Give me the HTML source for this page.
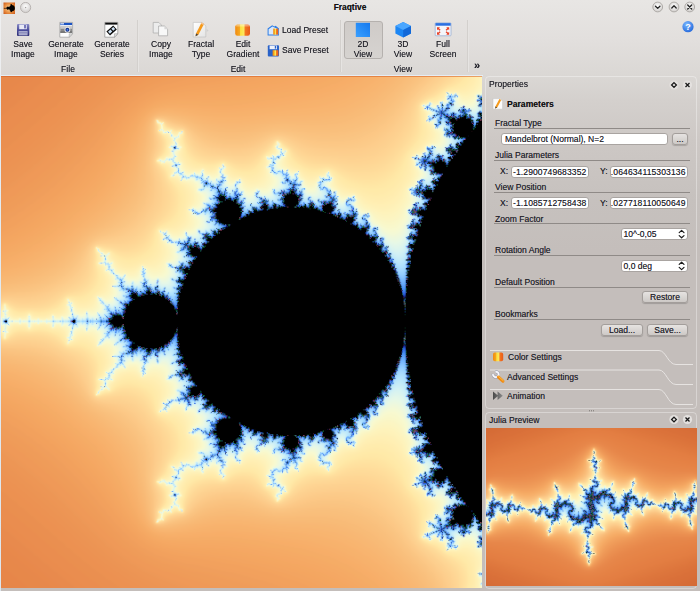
<!DOCTYPE html>
<html><head><meta charset="utf-8"><title>Fraqtive</title>
<style>
html,body{margin:0;padding:0}
body{width:700px;height:591px;position:relative;overflow:hidden;background:linear-gradient(#e8e6e4 0,#e2dfdd 40px,#dad7d4 77px,#d4d0cd 100px,#cdc8c5 140px,#c6c1be 200px,#c4bebb 250px,#c4bebb 100%);font-family:"Liberation Sans",sans-serif;font-size:8.55px;color:#22222a;line-height:10px}
.a{position:absolute}
.t{position:absolute;white-space:nowrap}
.t,.lb,.in span,.bt{text-shadow:0 0 .35px rgba(20,20,30,.55)}
.c{text-align:center}
#top{left:0;top:0;width:700px;height:77px}
#fr{left:1px;top:76px;width:481px;height:512px;background:#000;overflow:hidden}
#fr canvas,#ju canvas{position:absolute;left:0;top:0}
#pp{left:485px;top:76px;width:212px;height:333px;border:1px solid rgba(255,255,255,.35);border-radius:4px;box-sizing:border-box}
#jp{left:485px;top:412px;width:212px;height:177px;border:1px solid rgba(255,255,255,.35);border-radius:4px;box-sizing:border-box}
#ju{left:486px;top:428px;width:211px;height:158px;background:#e08040;overflow:hidden}
.in{position:absolute;background:#fff;border:1px solid #a9a4a1;border-radius:3px;box-sizing:border-box;height:12px;overflow:hidden}
.in span{position:absolute;top:0;white-space:nowrap;line-height:10px}
.bt{position:absolute;box-sizing:border-box;height:12px;border:1px solid #a39e9b;border-radius:3px;background:linear-gradient(#e6e3e1,#cdc9c6);box-shadow:0 1px 1px rgba(0,0,0,.18);text-align:center;line-height:10px}
.hl{position:absolute;height:1px;background:#8f8a87;left:494px;width:196px}
.lb{position:absolute;left:495px;white-space:nowrap}
</style></head><body>
<div id="top" class="a"></div>
<div id="fr" class="a"><svg class="a" style="left:0;top:0" width="482" height="512" viewBox="0 0 482 512"><defs><filter id="fb" x="-5%" y="-5%" width="110%" height="110%"><feGaussianBlur stdDeviation="2.5"/></filter><filter id="fc"><feGaussianBlur stdDeviation="0.6"/></filter><filter id="fa" x="-10%" y="-10%" width="120%" height="120%"><feGaussianBlur stdDeviation="7"/></filter></defs><rect width="482" height="512" fill="#e8894b"/><g filter="url(#fa)"><path fill="#ea8e4f" fill-rule="evenodd" d="M-2 46 -2 444 1 444 49 485 82 511 82 513 483 513 483 -2 55 -2 55 0 34 17 2 45Z"/><path fill="#eb9252" fill-rule="evenodd" d="M-2 77 -2 413 2 414 88 488 104 500 117 508 120 511 120 513 483 513 483 -2 90 -2 90 0 86 4 67 19 35 48 0 77Z"/><path fill="#ed9655" fill-rule="evenodd" d="M-2 102 -2 387 3 389 33 413 99 474 129 496 157 510 158 513 483 513 483 -2 119 -2 119 0 96 18 37 73 1 102Z"/><path fill="#ef9b59" fill-rule="evenodd" d="M-2 123 -2 366 2 367 15 376 46 401 116 470 134 483 155 494 192 507 204 510 205 513 483 513 483 -2 145 -2 145 0 143 2 133 7 113 22 42 92 13 115 3 122Z"/><path fill="#f1a15d" fill-rule="evenodd" d="M-2 146 -2 343 2 344 24 358 59 386 82 409 115 449 134 467 153 478 167 483 249 501 275 509 278 511 278 513 483 513 483 -2 193 -2 192 1 169 6 152 12 132 24 112 44 92 69 74 89 54 108 19 135 3 145Z"/><path fill="#f4a762" fill-rule="evenodd" d="M-2 164 -2 325 0 325 24 338 43 351 65 369 89 393 104 412 127 446 142 461 152 467 168 472 186 474 187 475 196 475 197 476 206 476 207 477 229 479 230 480 255 484 279 490 315 502 332 510 333 513 483 513 483 -2 273 -2 272 1 257 5 253 5 237 9 232 9 231 10 226 10 225 11 219 11 218 12 176 16 153 22 141 29 129 41 100 83 85 101 70 116 34 145 13 158 1 164Z"/><path fill="#f6ae68" fill-rule="evenodd" d="M-2 179 -2 311 2 311 14 317 16 317 37 329 61 347 85 368 99 383 108 395 120 415 133 440 139 449 145 455 153 460 169 464 214 464 215 465 238 466 239 467 257 469 258 470 262 470 263 471 267 471 268 472 272 472 273 473 277 473 303 479 322 485 346 496 365 508 368 511 368 513 483 513 483 -2 331 -2 331 0 328 2 305 10 289 14 285 14 280 16 255 20 254 21 235 23 234 24 224 24 223 25 174 25 173 26 165 26 154 29 147 33 138 42 128 58 123 69 109 93 96 110 78 128 58 145 33 163 6 177Z"/></g><g filter="url(#fb)"><path fill="#f7b571" fill-rule="evenodd" d="M-2 195 -2 294 19 300 41 311 59 324 72 336 97 356 113 373 123 389 123 391 133 413 141 437 146 447 151 452 158 455 180 455 181 454 187 454 188 453 193 453 206 450 213 450 214 449 236 449 237 450 245 450 246 451 252 451 253 452 278 455 279 456 309 459 310 460 327 463 339 467 356 475 370 484 384 495 400 511 400 513 483 513 483 -2 376 -2 376 0 372 4 360 12 345 20 335 23 332 25 311 30 306 30 305 31 275 34 274 35 268 35 267 36 262 36 249 39 242 39 241 40 210 40 209 39 203 39 202 38 197 38 184 35 176 35 175 34 156 35 149 39 145 44 140 55 138 63 136 66 126 94 120 106 111 119 94 136 45 176 20 189 2 195Z"/><path fill="#f9be7b" fill-rule="evenodd" d="M153 40 148 48 145 65 141 77 135 104 128 119 121 129 106 143 85 157 63 179 47 191 33 198 22 202 -2 207 -2 283 4 283 27 289 51 301 59 307 82 330 104 345 117 356 126 367 134 383 142 416 145 424 147 438 150 446 154 450 166 451 167 450 181 448 206 439 214 438 215 437 222 437 223 436 244 437 245 438 250 438 266 442 282 443 283 444 309 443 310 444 329 445 342 448 353 452 363 457 375 465 388 476 410 498 420 510 420 513 483 513 483 -2 401 -2 401 0 384 17 367 30 349 39 326 45 319 45 318 46 275 46 274 47 268 47 267 48 263 48 247 52 242 52 241 53 218 53 217 52 212 52 204 50 179 41 175 41 169 39 155 39Z"/><path fill="#fbc886" fill-rule="evenodd" d="M483 -2 420 -2 419 2 379 44 361 55 349 59 339 60 338 61 312 61 311 60 305 60 304 59 284 56 283 55 274 55 241 65 221 65 205 61 181 47 178 47 160 41 154 42 152 45 152 51 151 52 151 69 147 82 146 108 143 119 137 131 129 141 121 148 109 155 107 155 92 162 83 171 71 188 61 197 52 203 37 210 26 213 -2 216 -2 273 24 276 41 281 51 286 63 294 74 305 84 320 90 326 119 340 133 353 138 360 143 370 145 377 146 391 147 392 147 407 151 421 151 438 152 439 152 444 155 448 163 448 176 443 182 442 206 428 217 425 225 425 226 424 244 425 271 434 287 434 297 431 307 430 308 429 315 429 316 428 333 428 334 429 347 430 362 435 373 441 381 447 394 460 407 476 425 494 435 508 436 513 483 513Z"/><path fill="#fcd190" fill-rule="evenodd" d="M483 -2 436 -2 436 0 412 23 401 43 395 51 383 63 368 72 353 76 328 76 327 75 313 74 298 69 282 61 270 62 261 68 245 75 232 76 231 75 214 74 206 72 197 67 183 52 169 48 160 43 155 43 154 44 154 55 156 60 156 72 152 81 152 89 156 104 156 118 154 126 150 134 143 144 130 157 120 162 112 164 100 165 92 168 79 195 69 205 56 213 41 220 33 222 26 222 25 223 1 222 -2 223 -2 267 3 267 4 268 7 267 30 267 45 271 57 277 71 286 78 293 84 303 90 319 93 322 98 324 118 327 129 332 142 344 148 352 153 361 156 372 156 385 152 400 152 408 156 418 156 429 154 434 154 446 155 447 162 446 170 441 180 439 184 437 190 429 199 421 205 418 217 415 225 415 226 414 242 414 243 415 247 415 262 422 271 428 280 429 304 418 315 415 334 414 335 413 356 414 364 416 375 421 386 429 393 436 400 445 409 462 414 469 431 484 441 495 447 506 448 513 483 513Z"/><path fill="#fdda98" fill-rule="evenodd" d="M483 -2 447 -2 447 1 443 5 417 25 414 31 410 47 405 57 400 64 384 80 376 85 363 89 348 89 332 85 311 83 299 78 290 70 278 63 273 64 256 78 246 83 237 84 226 81 207 80 197 76 189 68 182 53 177 53 166 49 162 45 156 43 155 44 156 56 160 63 160 73 154 83 154 86 160 96 165 113 165 124 162 133 145 156 136 165 125 170 108 170 107 169 95 169 93 170 89 192 84 203 75 211 63 216 47 226 34 229 16 229 6 225 -2 226 -2 263 7 264 14 261 19 261 20 260 38 261 48 264 62 273 76 279 85 288 88 294 91 311 92 312 92 317 94 320 101 321 102 320 122 319 130 321 138 326 143 331 152 344 160 353 165 366 165 376 160 393 154 404 154 407 160 417 160 427 156 434 155 446 161 445 171 438 181 437 183 435 190 420 198 413 209 409 223 409 233 406 245 406 257 412 272 425 279 426 289 420 300 411 309 407 319 406 320 405 329 405 330 404 334 404 345 401 352 401 353 400 366 401 375 404 382 408 397 422 404 431 409 440 416 463 423 470 430 474 440 482 451 493 455 501 456 513 483 513Z"/><path fill="#fee3a1" fill-rule="evenodd" d="M483 -2 457 -2 457 1 450 7 441 12 433 19 422 24 418 29 416 52 409 66 389 91 382 96 371 100 354 100 344 97 329 90 312 90 305 88 296 83 292 79 290 75 277 64 275 64 270 71 253 87 247 90 236 90 223 84 218 84 217 85 204 85 200 84 194 81 187 74 183 65 182 54 173 54 166 51 162 46 155 44 157 49 157 55 162 61 164 67 163 68 162 76 155 83 155 85 163 94 165 101 171 111 173 118 173 126 170 135 154 151 146 167 139 173 129 177 120 177 110 173 95 170 94 171 93 200 89 208 83 214 77 217 65 219 55 228 49 231 42 233 15 233 5 227 -2 228 -2 261 4 263 17 256 40 256 48 258 54 261 63 269 67 271 76 272 82 275 87 279 93 289 94 319 109 317 112 315 122 312 127 312 134 314 140 317 147 324 153 337 167 350 172 359 173 372 162 397 155 404 155 406 161 412 163 416 163 427 157 434 157 441 155 444 156 446 159 444 162 444 163 441 169 437 175 435 181 436 182 435 183 425 188 414 196 407 206 404 225 405 232 401 239 399 248 400 254 403 275 425 278 425 286 419 291 412 298 405 309 400 326 400 327 399 331 399 345 392 357 389 373 390 379 392 387 397 396 406 412 428 417 442 417 451 418 452 418 461 419 463 435 472 442 478 452 484 458 490 462 498 462 503 463 504 462 513 483 513Z"/><path fill="#feebac" fill-rule="evenodd" d="M483 -2 466 -2 465 2 459 8 453 11 445 13 436 21 432 23 426 24 420 28 422 54 418 64 407 77 399 95 395 100 385 108 377 111 363 111 348 107 342 104 329 93 323 93 318 95 308 95 305 94 291 85 288 80 287 74 277 65 275 65 272 70 272 72 263 80 258 90 255 93 249 96 235 95 231 93 223 86 220 86 211 90 196 88 190 85 184 78 183 71 180 64 181 54 174 56 170 53 166 53 162 49 161 46 156 44 156 47 158 49 158 53 157 54 166 63 165 75 160 81 156 83 156 85 166 93 168 101 177 111 180 117 180 128 175 141 170 146 160 151 158 151 156 153 154 166 150 174 144 179 135 183 123 184 116 181 107 174 102 174 98 171 95 171 95 176 96 177 96 185 95 187 98 194 98 205 94 212 85 220 81 222 65 221 62 227 57 232 44 237 33 237 28 235 23 237 16 237 9 233 3 227 0 231 -2 231 -2 258 0 258 2 262 4 262 14 253 20 252 21 253 30 254 35 252 41 252 56 257 60 260 64 267 67 269 68 268 79 267 86 270 96 280 98 285 98 295 95 302 96 304 95 319 104 315 108 315 115 309 121 306 127 305 139 308 145 311 151 317 154 324 156 336 159 339 169 343 176 350 180 361 180 372 176 380 168 388 167 394 165 398 156 404 156 406 161 409 165 414 165 419 166 420 166 426 158 434 158 441 156 443 156 445 162 443 162 441 165 437 171 436 173 434 177 434 178 435 182 434 180 425 183 418 183 414 185 410 191 404 195 402 203 401 204 400 213 400 222 404 230 397 234 395 242 393 251 394 260 402 263 410 271 416 274 423 276 425 283 418 286 417 290 406 295 401 304 396 310 394 315 394 327 397 330 396 340 387 347 383 366 378 375 378 386 382 397 392 403 402 406 411 419 427 422 436 420 462 427 466 430 466 437 469 444 476 460 482 465 487 467 491 468 500 469 501 467 513 483 513Z"/></g><g filter="url(#fc)"><path fill="#fdf2bb" fill-rule="evenodd" d="M483 -2 476 -2 476 2 474 8 467 15 464 16 445 15 443 20 440 23 434 26 428 25 421 28 421 31 425 37 424 45 427 48 430 55 429 61 422 70 410 80 410 98 398 118 391 125 384 128 371 127 364 124 353 116 348 116 342 114 335 108 332 100 327 94 322 98 317 99 313 102 306 102 298 94 290 92 285 87 284 82 286 74 280 71 279 68 276 65 274 69 274 75 269 79 266 79 264 81 265 82 265 87 261 100 254 105 246 105 240 101 231 100 225 94 225 91 222 87 212 95 206 95 202 92 198 93 188 92 182 86 179 81 180 69 177 64 181 56 180 55 175 58 173 58 170 54 164 54 162 52 161 47 157 46 159 48 158 54 168 60 169 67 167 70 168 77 162 82 159 82 156 84 161 87 167 88 170 93 169 100 170 101 174 101 178 105 184 108 188 112 190 117 190 124 185 133 185 144 179 151 171 154 170 153 159 153 157 154 159 159 159 164 161 168 161 177 158 182 151 187 139 188 132 193 124 193 115 188 109 181 108 176 103 176 100 175 97 172 95 172 99 180 99 184 97 186 97 188 102 192 102 194 106 201 106 208 103 214 96 218 93 223 87 229 79 230 66 222 64 233 60 237 57 238 51 237 46 241 33 241 28 237 23 241 13 241 8 237 7 233 4 229 3 229 0 234 -2 234 -2 255 0 255 2 257 3 261 4 261 5 258 7 257 8 253 12 249 24 249 27 252 29 252 32 249 44 248 47 249 50 252 54 252 55 251 62 254 64 257 66 267 71 265 77 260 85 260 89 262 92 265 94 270 100 273 104 277 106 281 105 291 103 293 101 299 97 302 97 304 99 306 99 309 96 314 96 318 103 313 107 314 109 312 110 307 118 299 126 296 133 297 140 302 150 302 154 304 159 309 161 313 161 322 159 325 159 331 157 335 165 337 167 336 174 336 178 338 184 344 185 346 185 356 190 365 190 373 188 377 183 382 180 383 175 388 172 388 169 390 170 397 166 402 160 403 157 405 158 407 162 407 167 411 168 413 167 420 169 422 168 429 158 436 159 437 159 441 157 444 161 443 161 440 164 436 170 435 173 432 181 434 177 426 178 422 180 420 179 409 183 402 189 397 196 396 201 398 205 395 211 394 222 403 225 399 226 394 232 389 239 389 245 385 252 384 257 386 262 391 263 399 265 402 264 409 268 410 274 415 274 421 277 424 279 422 279 420 283 416 286 415 284 407 285 402 289 398 293 396 297 396 305 388 311 387 318 391 321 391 326 395 328 395 333 388 334 383 341 376 346 374 354 373 363 366 372 362 378 362 379 361 385 362 390 364 397 370 408 387 410 392 410 410 418 415 429 428 430 434 428 440 424 445 425 452 422 456 421 462 424 462 428 465 429 464 435 464 439 466 443 470 445 474 466 474 473 480 476 487 474 495 475 513 483 513Z"/><path fill="#f7f9d0" fill-rule="evenodd" d="M481 491 476 496 476 498 479 502 480 513 483 513 483 491ZM483 13 480 13 468 24 460 23 458 19 454 16 453 17 446 16 444 20 444 23 438 25 436 28 433 29 430 26 428 26 421 29 423 33 427 36 425 44 429 46 432 49 432 51 437 56 437 63 434 66 428 69 425 69 423 74 419 78 414 78 411 80 411 83 413 85 413 89 417 94 417 100 414 105 406 113 407 114 407 124 400 137 394 143 388 145 378 143 369 135 362 133 357 128 356 123 353 118 348 120 340 120 337 117 336 114 333 113 330 110 331 101 328 98 327 95 325 96 323 100 319 100 312 109 305 108 302 103 298 100 297 95 294 95 291 97 287 93 285 93 280 90 279 85 284 79 285 74 282 74 278 70 278 68 276 66 276 68 274 70 276 76 274 78 265 81 268 85 265 91 267 93 267 96 269 99 269 105 263 111 255 111 252 113 246 113 241 109 241 106 238 102 235 104 230 105 222 95 223 93 222 88 217 92 217 96 213 100 205 98 202 93 198 96 194 96 193 95 187 97 180 91 180 86 176 83 176 79 175 78 175 76 179 72 179 70 177 69 177 67 175 65 175 63 178 60 179 56 174 60 169 55 163 55 161 53 160 47 159 47 160 48 159 54 162 56 166 56 171 62 172 67 168 70 170 73 170 79 165 81 162 84 160 83 158 84 161 86 168 85 170 87 170 90 173 93 172 97 170 99 171 100 176 99 180 104 188 104 194 109 195 115 198 119 197 127 187 133 190 137 190 139 193 142 193 148 190 152 186 154 183 154 180 158 175 160 171 159 165 154 164 155 160 155 159 154 158 155 161 158 161 164 170 173 170 179 164 186 162 192 157 196 150 196 141 189 137 197 134 200 128 200 124 197 118 197 111 189 112 187 111 185 107 184 106 182 107 177 104 178 96 173 101 181 101 184 98 187 101 188 104 191 104 195 106 195 111 200 112 206 110 209 111 216 106 221 96 220 97 228 96 231 91 235 85 234 82 236 77 236 71 229 71 226 67 223 67 227 66 228 67 230 67 237 63 240 60 240 56 242 51 239 48 243 41 244 37 242 31 243 29 241 29 239 27 239 24 243 20 243 19 242 17 243 10 243 5 237 6 234 4 231 2 234 2 239 -2 240 -2 249 2 250 2 254 1 255 4 258 6 256 5 252 11 246 16 246 17 247 23 246 26 248 28 252 29 249 34 246 36 247 39 246 49 247 51 251 55 248 58 248 61 250 64 250 67 253 67 259 66 260 67 266 71 263 73 257 78 253 81 253 84 255 92 255 97 261 96 269 105 268 110 272 111 274 110 281 112 284 111 289 104 295 104 299 101 302 98 302 101 305 100 311 96 315 97 317 99 314 103 312 107 313 106 308 109 304 111 304 112 299 117 293 125 292 128 289 135 290 141 300 151 293 156 293 162 298 164 304 170 310 170 317 161 326 161 331 158 335 166 335 172 330 177 330 184 336 189 337 193 341 193 347 187 356 194 360 198 364 198 371 195 374 195 379 191 384 179 386 179 388 175 391 174 390 170 390 173 395 173 397 170 400 170 402 166 405 160 404 158 406 163 406 170 411 170 417 168 419 172 423 171 428 167 433 163 433 159 436 161 438 164 434 166 435 168 434 169 435 173 430 175 430 178 433 180 433 175 426 176 422 179 419 178 416 175 413 176 406 180 403 181 397 186 393 191 393 192 394 197 393 200 396 202 396 204 392 210 390 214 390 217 394 217 397 222 402 223 400 223 396 222 395 229 385 233 385 239 387 241 384 241 381 247 376 251 376 254 378 262 378 269 384 269 390 267 396 265 398 265 400 268 404 265 409 274 411 276 413 275 421 277 423 278 419 285 415 284 410 279 405 279 401 282 398 286 397 290 393 297 394 298 393 298 389 306 381 311 380 317 386 318 389 323 390 327 394 329 390 331 389 330 380 341 369 353 371 356 366 357 361 361 357 365 355 368 355 374 349 379 346 390 345 396 348 401 354 407 365 407 375 406 377 413 383 417 390 417 395 413 400 413 405 411 407 411 409 415 412 419 412 424 417 424 420 429 421 435 424 437 427 437 433 433 437 431 442 429 444 425 445 427 454 422 458 421 461 424 461 428 464 431 463 432 461 435 461 439 465 442 465 444 467 446 474 450 472 455 473 461 466 467 465 474 472 481 477 483 477Z"/><path fill="#dff5eb" fill-rule="evenodd" d="M477 496 477 498 480 501 481 504 480 507 481 513 483 513 483 496ZM40 245 37 243 35 245 34 244 31 245 28 241 25 245 20 245 19 244 13 245 17 245 18 246 19 245 25 245 28 248 28 250 28 247 30 245 35 245 36 246ZM5 234 3 235 4 237 3 241 2 242 -2 241 -2 246 0 246 3 249 4 252 4 250 10 245 4 239 4 235ZM483 17 475 19 475 23 474 24 475 27 472 31 466 31 462 28 461 29 457 29 455 27 456 19 454 17 453 18 446 17 445 20 446 24 444 26 439 25 433 31 430 29 430 27 422 29 424 33 427 33 430 36 427 39 426 44 428 45 431 44 433 46 433 50 435 52 440 52 441 53 442 60 444 62 445 66 440 72 437 72 433 69 425 70 425 74 419 80 414 79 411 81 415 85 414 89 420 93 424 97 424 99 416 104 415 108 412 111 411 110 408 112 409 118 412 120 413 125 410 130 405 134 408 142 407 145 404 148 402 156 396 162 389 162 381 157 378 151 376 149 373 149 368 143 369 141 368 137 361 137 360 138 357 135 357 132 352 127 354 125 353 119 350 121 345 122 340 126 335 118 335 115 332 115 325 108 330 103 330 101 327 98 327 96 325 97 324 101 319 101 319 103 316 106 316 115 312 118 307 117 301 109 301 104 297 103 296 99 297 97 296 96 294 96 290 100 286 94 277 93 274 90 275 84 278 83 281 79 283 79 284 75 281 75 280 72 278 72 276 70 275 71 279 74 279 76 274 80 266 82 270 84 270 86 267 90 269 93 269 96 273 99 275 99 278 102 277 109 275 111 271 112 270 115 267 118 261 118 256 113 250 121 246 121 237 110 239 107 238 103 231 110 228 110 225 108 225 103 224 102 225 100 220 95 223 91 222 90 218 92 219 100 213 104 210 104 208 102 208 100 204 101 201 96 201 94 198 99 194 97 187 100 184 99 182 97 182 95 180 95 178 93 177 90 179 87 177 87 173 84 174 81 173 75 177 71 174 66 174 62 175 61 173 61 169 57 170 60 173 62 172 64 174 66 172 69 169 70 171 72 172 80 170 82 165 82 164 84 170 84 172 87 171 89 175 92 175 94 172 99 176 97 180 100 180 102 184 102 185 103 191 101 194 104 197 105 199 108 197 114 204 116 206 119 205 123 201 126 202 129 198 133 194 133 193 132 188 133 191 136 191 138 200 140 202 143 202 149 199 152 196 152 195 156 193 158 188 158 186 156 184 156 184 159 182 162 177 162 173 164 166 158 165 155 164 156 160 155 163 159 161 163 164 163 166 166 172 167 176 172 175 174 175 177 177 179 176 184 173 187 169 186 166 187 166 190 170 195 169 199 164 204 160 204 158 202 150 204 145 200 144 193 141 190 140 202 136 206 131 204 129 206 127 206 124 203 124 199 119 200 112 195 112 193 109 191 110 186 107 187 105 185 105 179 100 177 103 181 103 184 99 187 101 186 106 190 105 194 107 194 114 200 114 203 116 205 112 210 116 213 117 218 112 222 112 225 110 227 105 227 100 222 97 222 98 223 97 224 102 230 101 234 99 236 96 236 94 240 89 240 85 236 82 241 78 241 77 239 74 239 72 237 71 231 69 228 70 227 68 226 68 232 70 235 70 238 65 243 63 243 61 241 58 244 55 244 52 241 50 244 45 244 44 245 49 245 52 249 54 246 59 246 61 248 66 247 70 251 69 259 67 261 68 263 69 263 72 253 80 248 83 249 85 253 89 249 93 249 96 253 99 253 101 255 102 260 99 263 98 268 100 268 104 263 111 263 112 264 113 269 117 271 117 275 115 278 111 280 114 281 116 284 114 286 114 289 107 296 105 296 106 299 102 303 100 303 103 305 103 309 101 310 101 312 105 310 105 305 107 303 110 303 109 299 112 297 113 293 120 289 123 291 124 290 124 286 126 284 133 285 135 283 140 287 140 294 139 295 141 298 144 296 145 289 151 285 156 288 161 285 163 285 167 288 170 294 165 303 173 303 177 307 177 311 175 313 176 318 173 322 167 323 165 326 162 327 163 330 159 334 161 333 165 334 172 326 175 326 178 328 181 327 184 330 183 331 184 334 188 331 193 331 195 333 195 336 202 340 202 347 199 350 195 350 191 352 191 354 188 356 190 357 198 356 201 359 201 363 205 366 206 371 203 374 197 375 197 377 199 379 199 382 197 385 194 385 192 388 188 388 185 386 183 388 181 387 176 392 171 391 175 395 175 397 171 400 172 401 171 404 169 406 162 405 165 407 170 408 172 410 170 420 173 421 174 423 173 427 170 431 172 429 176 429 177 430 173 426 175 424 176 419 178 418 173 414 174 411 173 405 179 402 177 399 180 394 182 394 185 390 188 390 193 393 198 391 200 393 200 395 201 395 202 391 204 389 207 390 208 387 212 385 219 390 218 396 222 400 222 397 220 394 225 389 225 382 230 379 234 384 238 386 239 383 237 381 237 379 239 376 242 375 243 371 247 368 251 369 255 376 257 376 262 371 267 371 269 373 270 377 274 378 277 381 278 387 274 391 272 391 269 394 269 397 266 399 270 404 266 409 267 408 271 410 274 409 279 413 279 415 276 417 277 422 276 419 280 417 282 414 283 415 284 414 283 411 275 405 274 399 276 397 283 395 286 396 286 394 290 390 292 390 294 393 297 393 296 391 297 387 301 385 301 380 304 378 305 374 308 372 313 372 316 375 316 383 319 386 319 389 320 388 324 388 327 393 327 391 331 388 325 381 331 375 335 375 335 371 340 364 342 364 347 369 353 370 354 364 352 362 357 357 358 353 359 352 367 353 369 350 368 346 372 341 377 340 379 335 386 329 390 327 394 327 397 328 402 333 404 341 408 347 405 356 410 359 411 363 413 365 413 368 409 372 407 377 410 379 413 379 416 383 415 384 416 386 418 386 424 391 421 396 418 397 416 400 414 400 414 404 415 405 412 407 412 409 415 411 419 410 425 415 425 419 432 421 439 417 445 423 445 426 442 429 441 436 439 438 436 437 434 438 432 444 426 446 427 451 429 451 430 454 428 456 425 456 422 461 424 460 428 463 430 463 430 460 433 458 439 464 444 463 446 465 445 469 446 473 451 471 452 472 456 471 455 463 458 460 463 461 465 459 471 458 475 462 474 465 475 466 475 470 483 472Z"/><path fill="#bfe8f9" fill-rule="evenodd" d="M481 507 480 508 481 510 483 510 483 507ZM478 496 478 499 483 501 483 497ZM172 414 172 418 171 419 175 420 175 417ZM176 399 173 400 174 403 177 402ZM185 387 183 389 181 389 176 394 174 393 177 397 177 395 179 393 181 393 186 388ZM112 293 107 297 107 300 104 303 108 301 108 298 111 296ZM5 242 1 244 2 247 4 248 7 246 7 244ZM106 188 107 189 107 193 112 197 110 193 108 192 108 188ZM177 92 175 96 177 96 181 100 185 102 188 101 183 100 181 98 181 96 178 96ZM173 79 171 84 173 86 173 89 176 90 178 88 174 87 172 85 172 82 174 80ZM174 69 171 70 172 73 175 72ZM60 244 61 246 66 245 68 248 71 249 71 252 73 249 76 249 77 246 81 247 83 246 86 249 86 251 86 249 88 247 91 248 93 246 97 249 97 252 99 250 101 250 105 253 105 255 103 257 104 260 99 265 99 267 104 261 107 261 110 258 115 260 116 264 114 266 114 268 118 266 120 267 122 273 115 280 118 283 117 284 118 285 115 288 114 291 117 290 118 288 122 289 123 282 125 280 129 280 131 284 132 284 133 280 138 279 140 282 139 283 142 285 141 295 143 296 143 289 147 286 148 282 153 281 155 283 155 285 157 286 158 284 157 282 160 279 169 278 172 282 169 287 173 288 175 290 175 292 173 294 174 296 172 298 169 298 167 302 169 302 171 300 176 301 178 305 182 306 181 310 182 312 179 314 178 313 176 314 178 316 178 319 174 323 168 324 164 327 163 332 173 324 177 326 180 325 183 326 185 328 184 333 192 327 193 328 197 327 199 330 196 335 198 336 200 334 202 334 209 339 209 341 205 343 205 345 207 347 207 349 202 353 194 352 192 353 191 356 198 354 203 358 204 360 202 362 203 363 207 363 209 365 207 368 211 371 211 373 207 378 204 378 202 376 198 376 202 380 200 385 198 387 195 387 192 390 190 390 190 391 191 390 192 391 195 390 196 391 198 389 201 392 201 389 203 387 207 389 207 386 214 382 216 386 220 387 221 391 219 393 219 395 219 393 221 392 224 386 221 380 222 379 226 379 226 376 229 375 232 376 234 378 234 382 236 384 238 384 235 380 237 375 241 374 240 370 242 368 244 368 244 364 246 362 253 363 256 366 254 369 254 373 256 375 257 375 257 371 258 370 272 367 273 370 271 373 271 376 273 377 275 375 277 375 282 379 282 381 280 383 280 385 282 386 282 389 278 393 277 392 273 392 270 395 270 398 268 400 271 403 271 407 269 408 274 408 280 414 282 412 273 405 272 397 274 395 278 396 282 395 283 393 285 395 290 387 292 387 294 389 294 392 295 392 297 387 296 385 297 384 300 385 299 379 303 377 302 373 304 369 309 370 312 366 320 368 322 370 322 374 318 377 317 383 320 386 320 388 326 387 327 388 326 391 329 388 329 386 328 385 323 385 321 381 328 377 331 373 334 374 334 371 337 366 336 364 337 360 339 358 342 358 344 360 343 361 344 365 347 368 351 368 352 370 354 366 350 363 352 361 352 359 354 357 356 357 357 350 359 349 363 352 367 352 368 349 366 346 369 343 369 340 371 338 372 339 376 339 377 338 376 334 378 330 383 328 383 324 385 321 388 320 388 317 396 311 399 312 403 316 403 319 406 324 404 329 407 331 408 336 406 337 405 341 408 342 411 347 411 349 407 352 406 356 410 357 412 362 418 366 416 369 414 369 410 372 408 377 413 378 417 382 416 385 418 385 420 387 423 387 426 384 429 387 428 393 426 395 423 395 420 398 418 398 415 401 416 406 413 407 413 409 417 410 418 408 423 413 426 414 425 419 429 419 430 420 433 420 432 416 435 412 436 413 442 412 444 414 443 418 451 425 443 430 443 435 442 436 443 440 442 441 440 441 435 438 433 442 435 444 435 446 434 447 427 446 427 449 428 450 430 449 433 453 428 457 426 456 423 460 424 459 429 462 428 460 430 458 434 457 436 460 439 461 439 463 444 461 447 464 446 467 447 471 446 472 451 470 454 472 456 469 452 467 453 466 452 457 455 456 459 459 463 460 464 458 469 457 470 454 473 452 478 457 476 461 477 463 475 465 477 468 476 470 477 471 483 471 483 18 476 19 475 24 477 26 476 29 478 33 473 37 468 32 465 32 462 29 454 34 452 32 453 29 452 22 456 20 455 18 453 19 447 18 446 19 447 26 443 29 441 26 439 26 439 28 436 29 434 32 429 31 428 30 429 27 424 30 425 32 428 32 433 36 430 40 428 40 427 44 434 42 435 46 433 48 435 51 437 51 442 48 443 49 442 51 443 59 445 61 449 62 451 65 446 70 444 70 443 73 444 75 442 77 434 77 432 74 434 71 431 69 429 71 426 70 425 71 426 75 422 77 419 81 417 81 416 79 412 81 413 83 416 84 415 89 417 89 419 92 421 92 423 94 426 94 427 98 430 101 427 105 425 105 422 102 419 103 416 106 416 108 413 112 411 111 408 112 410 115 410 118 418 123 412 128 409 133 406 134 408 138 411 140 411 142 409 144 409 146 405 149 408 154 408 156 404 161 406 166 403 171 403 174 398 178 393 177 388 172 388 170 383 166 383 161 379 160 376 156 377 152 376 151 371 151 369 149 369 146 366 144 366 142 368 140 367 137 363 138 359 141 357 140 356 132 354 132 350 127 354 123 353 120 350 122 347 122 344 125 344 129 342 132 337 130 336 120 334 118 334 116 331 117 329 113 321 108 323 105 329 104 329 102 326 97 327 101 326 102 319 102 320 104 317 106 317 111 322 116 322 119 320 121 317 121 314 124 311 123 309 119 304 121 302 116 303 112 299 111 301 105 297 105 296 104 295 97 294 101 290 103 285 95 283 96 281 94 277 94 276 95 273 94 272 92 272 89 274 87 273 84 278 82 279 79 282 77 280 76 275 81 270 82 271 83 271 87 269 88 270 95 275 98 279 97 282 101 282 103 280 105 282 111 279 112 276 115 271 113 271 116 273 119 273 121 271 123 269 123 264 120 258 120 257 119 258 116 256 114 254 117 254 121 256 123 253 127 250 126 246 127 244 125 244 121 240 120 241 116 239 116 235 110 238 105 234 107 233 109 234 112 229 115 226 113 226 111 223 111 221 109 224 104 223 103 224 101 219 96 219 94 221 92 219 92 219 96 221 98 220 102 218 104 215 104 214 107 208 105 206 102 207 101 203 103 201 101 202 99 201 98 199 100 191 99 195 103 198 103 200 105 201 111 198 113 199 114 201 114 206 111 211 116 211 119 207 121 209 125 203 127 204 130 199 135 195 135 191 133 191 135 195 138 199 137 205 138 207 140 205 146 209 150 207 153 204 153 201 156 197 154 197 157 199 160 196 163 195 162 191 162 190 160 187 160 185 157 185 162 181 164 178 163 172 165 170 162 167 161 165 157 161 156 164 159 163 162 165 162 167 165 174 166 178 170 178 174 176 175 180 176 182 178 181 179 182 183 180 185 178 185 175 189 172 190 167 187 167 190 172 192 175 197 175 200 173 202 171 201 170 202 172 207 168 212 166 212 164 210 160 211 157 207 156 203 155 207 153 209 148 207 143 201 143 193 142 192 141 194 142 204 139 206 138 210 134 210 131 206 129 209 124 209 122 201 120 202 115 199 115 201 118 205 117 208 115 210 113 210 116 210 118 212 118 214 120 214 122 216 120 223 114 222 116 225 115 229 109 231 108 229 105 229 99 223 98 224 104 230 104 234 105 235 101 240 97 238 97 241 94 243 92 242 89 243 86 240 84 243 80 243 79 244 75 240 74 241 71 237 71 240 67 244 62 244 61 243Z"/><path fill="#9cd3fe" fill-rule="evenodd" d="M478 497 481 500 483 500 483 498ZM478 459 477 460 478 464 476 465 478 468 477 470 483 471 483 459ZM3 243 2 245 5 247 6 244ZM72 241 68 245 69 247 73 248 76 245ZM174 70 172 71 173 73 175 72ZM483 19 477 20 476 24 478 26 477 29 479 31 483 31ZM447 19 447 22 449 24 443 31 440 26 440 29 438 31 436 30 435 33 429 32 427 29 425 30 426 32 428 31 435 36 427 43 435 41 436 42 436 46 434 48 435 50 437 50 440 47 441 44 446 50 444 52 442 52 444 55 443 59 447 61 450 61 454 63 455 65 452 69 448 68 446 71 444 71 444 74 446 77 445 80 441 78 440 79 439 78 435 78 433 80 431 76 431 72 433 71 430 70 426 71 427 75 426 78 423 77 419 82 417 82 415 80 412 81 418 84 415 87 416 89 418 87 420 92 421 91 423 94 426 93 428 95 428 98 433 100 428 108 423 108 422 107 423 103 420 103 417 105 417 108 415 109 413 113 409 112 411 115 410 117 419 121 422 125 420 128 415 126 412 128 411 132 407 134 409 138 413 139 415 141 412 142 409 147 406 149 407 152 410 154 405 161 408 165 405 169 406 175 404 177 405 179 404 186 400 191 398 191 395 188 393 183 390 180 390 177 386 173 387 170 382 167 382 161 379 162 377 160 375 156 376 151 372 151 370 153 369 152 369 149 365 143 365 141 367 139 366 138 362 139 360 141 360 145 359 146 356 144 355 133 347 126 348 124 353 124 352 121 351 123 348 122 345 125 345 129 348 131 348 133 345 136 344 135 340 136 339 133 337 133 335 131 336 127 334 119 333 118 331 119 329 114 325 111 320 111 319 110 321 105 325 104 325 103 322 103 318 106 318 112 321 113 323 112 325 114 326 117 324 119 324 122 321 124 319 124 317 122 316 126 314 127 309 123 309 120 306 122 305 125 303 125 301 123 302 120 301 114 302 112 299 114 297 113 299 107 297 107 295 105 296 102 291 105 286 100 286 97 283 97 281 95 277 95 279 95 281 97 281 99 283 100 283 104 281 105 281 107 285 107 287 110 276 116 274 116 272 113 272 116 274 118 276 118 278 121 274 126 271 124 269 126 267 122 266 123 264 121 262 122 257 121 256 120 257 115 256 115 254 118 258 123 255 129 249 128 249 131 245 132 243 130 243 126 242 125 243 122 241 123 239 122 240 117 238 117 236 115 235 111 235 113 231 115 232 116 230 118 224 112 221 113 219 111 219 109 222 106 222 101 217 105 217 107 215 109 211 108 206 104 202 104 200 101 196 101 196 102 198 101 201 104 203 110 208 110 210 113 212 113 214 115 212 120 210 122 208 122 210 122 212 125 209 128 205 127 206 130 200 135 202 135 204 137 207 136 209 138 208 144 205 145 206 146 211 145 214 151 212 153 209 153 208 156 204 155 200 157 197 155 201 159 199 162 200 164 198 166 195 165 194 163 191 165 189 161 187 160 181 166 178 164 175 165 176 168 178 168 180 170 179 174 184 176 184 178 182 180 184 180 186 183 183 186 179 186 178 189 176 190 175 189 173 191 168 188 169 190 173 191 178 198 174 203 171 202 175 207 175 209 172 211 174 214 172 217 169 218 168 216 165 216 163 214 163 212 160 214 156 208 156 204 156 208 152 212 149 209 147 209 145 204 143 203 143 205 141 206 140 209 141 211 137 213 135 211 133 212 131 207 131 209 129 211 123 211 121 208 121 203 117 202 119 204 119 207 117 210 125 216 125 218 123 220 124 222 121 225 118 225 119 228 118 232 117 233 114 232 112 234 110 234 107 230 105 230 107 238 104 239 103 242 99 241 94 245 91 243 88 244 86 242 83 245 81 244 81 245 84 245 85 247 88 246 91 247 94 245 97 246 99 249 102 247 107 252 107 254 105 256 105 260 110 255 112 255 114 258 115 257 118 258 119 260 118 265 122 265 124 267 123 270 125 272 125 274 123 276 121 276 117 280 119 282 118 287 121 286 122 284 121 281 124 278 129 278 131 282 133 278 137 277 141 278 141 283 143 285 143 287 145 285 145 282 151 278 156 282 156 285 157 285 156 281 159 276 161 276 163 278 165 273 167 274 170 271 173 275 172 279 174 279 175 282 170 287 174 286 178 291 175 294 174 299 177 300 179 303 183 303 186 306 186 308 183 310 184 313 182 315 177 314 179 315 180 320 174 324 175 325 176 324 177 325 179 324 184 325 186 327 186 329 190 328 191 324 193 326 196 324 199 324 200 325 199 328 201 330 197 335 199 333 203 333 205 335 208 334 209 336 214 338 211 344 206 344 209 347 208 349 209 351 206 354 204 352 202 354 199 353 193 354 193 355 195 353 199 353 205 359 204 362 209 362 212 365 209 368 212 369 214 374 212 377 210 376 210 378 208 380 203 380 202 381 200 389 203 385 206 386 208 383 214 380 217 383 217 385 219 385 221 387 221 389 222 388 222 384 220 382 219 378 221 376 224 377 230 371 235 378 236 374 240 373 238 369 240 366 242 367 242 364 245 357 247 357 249 359 248 360 249 362 252 360 256 361 256 364 258 365 258 367 255 370 255 373 256 373 257 369 267 367 269 364 270 365 275 364 278 369 271 374 272 376 275 373 287 380 285 383 283 382 281 383 283 385 284 389 279 394 273 393 269 400 272 398 271 397 274 393 277 395 279 394 281 395 283 392 286 392 290 385 293 386 295 388 295 390 296 388 295 384 297 382 299 382 297 377 299 375 302 377 301 376 301 372 302 371 302 366 304 364 306 365 307 369 309 369 309 367 315 362 317 367 322 366 326 373 324 377 320 376 318 378 318 383 322 387 324 386 328 387 328 386 323 386 320 383 319 380 321 378 323 379 328 376 331 371 333 373 334 372 334 369 336 366 335 358 339 356 341 353 342 354 346 354 348 356 348 358 344 361 345 365 348 367 353 366 352 365 349 366 347 364 355 356 356 354 356 346 359 344 362 351 367 351 365 346 369 341 369 338 370 337 376 338 375 333 378 328 382 328 382 323 384 320 387 319 386 316 390 313 390 309 393 307 393 304 397 299 401 299 404 303 404 308 405 309 404 313 406 315 405 320 407 322 407 326 405 329 408 331 408 333 410 335 409 337 406 338 406 341 408 341 411 347 414 349 409 351 407 356 409 356 412 359 412 362 415 364 417 364 419 361 422 364 419 369 414 370 410 373 411 375 409 377 413 377 418 382 417 385 423 386 422 384 423 381 425 382 428 381 429 385 432 388 432 390 429 392 426 397 423 395 421 399 419 398 417 401 415 401 415 403 418 405 414 408 415 409 418 407 423 412 425 411 428 414 426 416 426 418 431 420 433 419 431 417 431 413 433 409 436 412 442 411 444 409 446 411 444 415 444 418 449 422 452 421 455 424 450 429 448 428 443 431 444 432 443 437 446 440 442 445 440 444 439 441 435 439 434 442 436 443 436 448 433 449 428 446 428 448 430 448 434 452 434 454 427 458 426 457 426 459 435 456 436 459 438 458 440 460 440 463 443 458 447 464 449 465 447 469 454 471 455 470 451 468 452 461 448 457 449 454 453 454 454 453 462 460 464 457 468 457 469 456 468 453 474 448 476 453 479 456 483 456 483 34 477 35 474 41 468 36 469 35 468 33 465 33 462 30 457 33 456 36 449 35 448 32 452 29 451 21 455 19 453 20Z"/><path fill="#6eaffa" fill-rule="evenodd" d="M478 460 477 461 479 463 477 466 478 467 477 470 479 469 481 471 483 471 483 461ZM5 243 3 244 3 246 6 245ZM72 242 69 245 71 247 74 247 75 245ZM448 20 450 25 446 28 446 30 442 32 440 29 439 32 434 34 436 37 432 39 430 42 436 39 438 40 436 44 437 47 435 48 436 50 439 47 439 44 442 41 444 43 443 45 448 50 447 52 443 53 444 59 448 61 450 60 454 63 457 63 458 65 455 66 453 69 448 69 445 71 445 75 448 79 445 82 442 79 438 79 437 78 433 82 430 82 429 81 431 78 431 74 430 73 431 70 430 72 427 72 428 75 427 78 423 79 418 83 419 84 416 87 416 88 419 87 420 91 422 90 423 93 425 93 427 91 429 95 428 97 429 98 433 98 435 101 430 104 431 108 430 109 422 110 420 106 422 104 420 104 417 106 418 108 417 110 412 114 409 113 411 114 411 116 414 119 419 120 423 124 423 126 421 130 417 130 416 126 415 126 411 133 408 134 409 137 411 139 415 139 417 143 415 145 413 143 411 143 407 150 411 154 408 159 406 160 406 162 409 165 405 170 407 172 407 175 405 177 406 181 404 188 405 190 404 191 404 197 401 201 397 197 394 188 392 186 392 183 389 180 389 177 386 175 387 171 382 169 381 166 382 162 378 163 377 162 377 160 374 155 375 152 372 152 370 157 368 156 367 154 368 153 368 148 363 141 365 139 363 139 361 141 361 143 364 146 362 148 358 148 354 144 356 137 352 133 352 130 345 126 347 124 346 124 345 128 350 130 350 133 347 137 343 136 341 138 338 133 335 135 334 134 335 128 333 127 335 125 334 121 331 120 329 118 328 114 325 112 327 117 324 120 327 123 319 125 317 123 317 125 319 127 317 130 309 124 308 121 307 122 308 125 306 127 301 126 300 125 301 116 300 115 297 116 295 113 295 110 298 109 298 108 294 104 291 106 289 105 285 100 285 98 284 98 284 105 286 105 289 110 284 114 280 114 279 116 275 117 280 120 277 123 279 126 278 127 271 126 269 128 267 126 267 124 264 122 260 122 259 121 258 122 259 123 258 125 259 128 257 131 256 130 251 130 249 134 246 133 244 135 242 133 241 129 242 126 241 124 238 123 239 118 236 116 236 114 230 120 227 119 224 114 221 115 217 111 219 107 221 106 221 104 214 111 212 109 208 108 206 105 203 105 203 109 208 108 210 111 215 113 215 118 211 122 214 124 211 127 212 129 210 130 207 128 206 129 207 130 203 134 201 134 201 135 207 134 210 137 209 144 212 144 214 146 213 148 216 148 218 151 214 154 213 153 210 154 209 158 206 156 200 157 202 159 200 162 202 165 199 168 194 165 190 167 189 163 187 161 185 165 183 165 181 167 178 165 177 167 181 169 180 174 184 173 185 174 185 180 189 182 186 185 185 188 180 187 178 190 174 191 180 197 180 199 174 204 177 208 174 212 176 215 173 217 175 219 174 221 171 222 167 219 167 217 165 218 162 214 159 215 156 212 156 210 151 213 144 208 145 207 144 204 143 204 141 209 143 212 138 215 133 213 131 210 130 212 123 212 120 208 121 206 120 205 119 206 120 207 119 210 122 213 125 213 127 217 125 220 126 223 122 226 119 225 119 227 122 230 119 232 120 234 119 235 114 234 113 236 111 236 106 231 109 239 106 240 104 243 99 243 97 245 104 246 108 250 109 253 106 258 110 254 112 254 114 256 118 254 121 259 119 264 122 263 127 267 124 270 127 271 126 275 123 276 119 280 120 282 119 284 120 285 121 284 120 281 123 277 132 278 134 276 135 277 138 274 139 276 141 275 143 277 142 283 144 284 145 280 149 279 151 277 156 280 156 278 159 275 162 275 165 271 166 272 171 267 173 268 175 271 173 273 175 274 175 276 173 278 175 278 177 281 175 286 178 290 181 291 176 295 175 299 177 299 180 303 185 301 186 304 189 307 188 309 185 310 185 315 184 316 180 316 181 320 177 324 182 323 185 324 187 328 189 328 188 324 190 322 195 324 199 321 202 325 201 327 202 330 201 332 202 333 206 334 209 332 210 335 215 336 218 339 216 342 214 342 212 345 209 346 210 347 209 349 210 352 207 356 204 354 202 355 206 359 206 361 210 360 214 364 211 367 216 375 207 382 203 381 202 384 205 385 213 379 215 379 218 382 218 384 221 385 217 378 221 374 224 376 226 372 231 369 233 371 233 374 235 377 236 373 239 371 237 369 238 366 241 365 242 363 241 361 243 360 242 356 244 354 246 356 249 356 250 359 252 360 257 359 259 361 258 362 259 367 257 369 266 366 269 362 271 363 271 365 273 363 278 362 279 364 277 366 280 370 276 373 274 372 272 374 275 372 279 375 284 376 285 378 289 379 288 382 284 385 285 389 284 391 286 391 285 389 291 383 293 386 295 386 294 383 298 381 295 379 296 375 300 374 301 372 301 367 300 366 301 363 303 364 306 362 308 364 307 366 308 369 309 365 312 364 315 360 318 360 319 362 317 364 317 366 322 365 327 367 325 369 327 373 325 377 326 377 329 374 330 370 333 371 335 367 334 363 336 362 334 358 335 354 337 356 341 352 347 353 350 356 350 359 345 361 346 365 346 363 351 360 352 356 355 355 356 351 354 346 358 341 361 341 364 344 361 346 361 349 363 350 362 349 365 347 366 343 368 342 368 334 371 332 372 333 371 336 373 338 376 337 374 335 377 330 377 328 378 327 379 328 382 327 381 325 382 321 384 319 386 319 386 315 389 313 389 309 392 307 392 304 394 302 394 299 396 297 398 291 400 289 402 289 404 292 405 308 406 309 405 313 407 316 405 320 407 321 408 324 406 329 408 330 409 334 413 335 407 338 406 340 410 343 410 345 412 347 415 344 417 347 415 350 409 352 408 356 410 356 413 359 414 363 416 363 417 359 421 360 423 364 419 370 418 369 413 371 411 373 412 375 410 377 412 376 418 381 417 384 419 384 420 386 422 386 421 385 421 381 422 380 425 381 430 380 431 381 430 385 432 388 435 389 434 391 429 392 428 395 429 397 427 399 424 396 422 399 419 399 420 402 419 403 416 402 419 404 417 407 419 407 423 411 426 410 428 413 428 415 426 417 430 419 432 419 430 417 431 411 429 410 430 407 432 407 437 412 441 411 444 407 447 411 445 415 445 418 449 422 453 419 454 422 458 425 456 427 453 427 450 430 447 429 444 431 445 433 444 437 447 437 448 440 445 442 443 448 439 445 439 442 436 440 435 441 437 442 436 447 438 449 434 450 431 448 436 452 434 455 437 455 438 456 437 458 439 457 441 461 441 458 443 457 450 465 452 465 451 461 448 460 448 458 445 454 447 452 452 454 457 451 458 452 457 455 462 459 463 457 466 456 468 457 468 455 466 453 468 451 470 451 472 447 474 446 476 448 476 453 479 455 483 455 483 34 476 36 476 41 474 43 472 42 472 40 470 38 467 37 469 34 468 33 465 34 462 31 457 34 458 35 457 38 453 36 446 37 445 36 447 34 447 30 451 29 452 25 450 23 450 20ZM483 19 479 20 476 24 479 26 478 27 479 30 483 29Z"/><path fill="#67a9f8" fill-rule="evenodd" d="M479 460 478 461 480 463 478 466 481 470 483 470 483 461ZM70 244 72 247 74 246 73 243ZM446 31 443 34 440 32 438 35 436 35 438 36 437 38 439 39 437 45 438 47 438 44 440 42 440 40 442 39 445 42 445 47 447 49 448 48 449 49 449 53 448 54 446 53 444 54 445 56 444 59 448 60 450 58 453 62 457 63 459 62 460 64 457 67 456 66 453 71 449 69 445 72 446 76 449 79 445 84 439 79 436 79 433 83 428 84 427 82 430 78 430 74 428 72 427 73 429 75 426 81 424 80 420 83 421 89 422 88 423 89 424 93 426 88 429 92 429 98 434 98 437 100 430 105 432 108 432 110 430 112 429 109 427 110 425 109 421 112 420 111 421 109 419 105 418 106 419 109 412 114 414 118 416 118 418 120 420 118 421 122 424 123 425 125 422 127 423 129 422 131 420 130 417 131 415 129 415 127 413 129 414 130 412 131 409 136 411 138 414 138 417 141 417 144 414 146 412 143 408 151 412 152 414 154 414 156 412 157 411 155 406 161 411 165 406 170 408 173 405 177 407 180 405 183 406 185 405 189 406 190 404 192 405 193 404 208 402 210 400 208 400 206 397 201 398 200 393 190 393 188 391 186 391 183 389 182 388 179 389 177 387 177 385 174 386 171 383 172 382 171 382 168 380 165 381 162 379 163 380 165 377 167 375 165 376 162 375 157 372 159 367 157 368 149 365 145 362 149 358 149 353 146 355 136 352 135 351 130 349 138 346 137 342 140 338 135 334 137 333 136 334 129 332 128 332 126 334 125 334 122 329 119 328 115 327 119 329 121 329 123 326 125 320 125 320 129 318 131 314 130 310 125 306 129 303 127 301 129 298 127 300 124 299 122 300 116 296 117 294 112 294 110 297 108 293 106 292 107 289 106 291 110 286 113 285 116 282 114 278 117 278 118 279 117 281 119 279 123 281 127 280 128 271 127 269 129 266 126 266 124 259 122 260 123 259 125 260 128 258 132 251 131 250 135 246 134 246 136 242 138 241 137 242 131 240 129 241 125 238 125 236 120 238 118 235 115 233 121 229 120 227 121 224 118 225 116 220 117 216 111 217 118 213 121 216 123 216 126 213 128 212 131 210 132 208 130 204 134 207 132 212 138 210 140 210 143 211 142 213 143 215 146 221 150 216 153 215 155 212 154 210 159 208 159 206 157 204 158 202 157 202 161 201 162 204 165 199 170 194 166 191 168 188 168 187 167 188 163 182 168 180 167 182 169 182 171 180 173 182 173 184 171 186 173 185 176 186 179 189 180 190 183 186 187 187 188 186 190 181 187 179 190 175 191 182 199 180 202 178 201 175 204 178 207 175 212 176 216 174 217 176 219 175 220 175 225 173 227 165 218 162 216 160 217 155 211 153 215 150 214 148 211 144 210 143 207 143 210 145 211 145 213 142 216 139 215 137 217 136 215 134 214 133 215 131 212 127 213 127 215 129 216 126 220 128 223 125 226 120 227 123 230 121 233 122 234 120 237 118 236 111 237 110 236 110 239 103 245 106 246 110 250 109 254 113 252 115 254 116 253 120 253 121 254 121 257 123 259 122 262 129 267 126 269 129 272 126 277 128 276 132 277 133 275 139 273 144 275 145 279 149 278 153 274 155 279 155 277 159 273 162 274 165 270 169 268 173 262 175 263 175 269 176 270 175 278 178 281 176 286 178 289 180 288 182 289 181 293 177 295 176 298 180 302 182 300 186 300 187 304 191 307 186 311 185 313 186 316 184 318 181 317 183 320 180 322 185 323 188 326 187 323 189 321 191 321 192 323 195 323 199 319 201 321 201 323 204 325 201 328 202 332 206 333 208 331 210 331 211 335 213 336 215 335 221 339 217 343 214 343 214 345 212 347 210 346 210 350 212 352 207 357 203 355 208 360 211 358 213 360 212 362 216 364 215 367 213 368 216 370 217 376 220 373 224 374 225 373 224 371 226 369 230 369 231 368 234 369 233 372 235 374 237 365 241 363 240 361 242 359 241 358 241 352 243 351 247 355 250 355 251 359 254 359 257 357 260 361 259 363 260 366 259 367 262 367 266 365 269 360 272 363 280 361 281 363 279 368 281 371 278 372 278 373 280 375 286 374 287 377 289 377 291 379 291 381 287 385 285 385 285 387 291 382 293 383 294 381 296 381 294 381 293 378 297 372 300 373 299 363 301 361 304 362 306 360 309 364 311 364 314 359 318 358 321 362 320 365 327 365 329 367 327 370 328 374 328 372 331 369 333 370 335 365 333 363 334 361 333 354 334 353 338 354 342 350 344 352 350 352 351 353 350 354 351 358 352 355 355 353 353 344 354 343 355 344 358 340 362 340 365 345 366 342 368 341 367 333 369 331 372 331 374 333 372 335 372 337 373 337 376 330 375 324 379 323 380 324 378 326 381 327 379 325 382 322 381 318 382 317 385 318 386 313 389 312 388 311 389 308 392 307 391 305 393 302 393 299 395 298 398 286 402 279 405 291 405 302 406 303 405 307 407 310 405 313 408 317 405 319 408 322 408 324 410 323 411 324 410 326 407 327 407 329 409 333 412 332 414 334 412 337 408 338 407 340 411 343 412 346 414 343 418 347 414 351 411 351 409 353 409 355 414 359 413 361 415 362 415 360 417 358 418 359 422 359 423 360 422 362 425 365 424 367 421 367 421 369 419 371 417 370 412 374 419 381 418 384 421 381 420 380 421 377 424 380 428 380 430 378 432 380 430 384 433 388 435 387 437 390 434 392 430 392 429 394 430 398 426 401 424 397 422 401 420 399 421 409 425 408 430 415 430 412 428 410 429 406 434 407 438 411 441 410 441 408 446 405 447 406 446 409 448 411 445 416 445 418 449 421 454 418 455 419 454 422 459 425 456 428 454 427 451 431 448 429 445 431 445 436 449 437 449 441 448 442 447 441 445 443 446 446 442 450 438 445 439 444 438 442 437 444 439 450 438 451 438 455 440 456 442 455 447 458 444 453 448 450 451 453 455 452 456 450 459 451 460 453 458 455 460 457 463 457 466 455 468 456 465 453 467 450 469 451 471 449 471 446 473 443 475 444 475 447 477 448 477 453 483 454 483 35 477 36 477 41 475 43 475 45 473 46 471 42 472 41 470 39 467 39 465 36 468 35 468 34 464 34 461 32 458 34 460 38 455 40 453 37 450 37 449 39 445 38 443 36 447 32ZM483 20 478 22 477 24 479 25 478 29 483 28Z"/></g><path fill="#000000" fill-rule="evenodd" d="M483 44 478 45 477 47 478 48 471 55 470 54 471 48 463 40 456 45 453 43 450 43 454 48 453 50 454 54 453 55 457 59 461 59 462 60 463 59 465 61 465 63 461 70 458 71 458 73 455 77 453 75 451 75 453 77 453 81 450 83 450 86 447 89 445 89 442 86 439 85 435 88 431 87 434 90 435 93 434 95 438 96 441 95 443 97 442 100 435 107 437 109 434 114 434 116 432 118 427 114 422 116 424 117 424 120 425 119 430 123 430 125 426 128 426 132 424 135 420 134 418 136 424 140 420 144 420 148 414 150 419 153 417 159 415 161 413 161 416 164 415 165 415 169 413 171 412 170 414 173 411 176 412 180 410 183 411 186 410 191 408 193 408 197 409 198 407 201 407 210 405 217 406 219 405 229 403 231 401 229 399 213 394 203 395 202 393 200 394 198 391 196 392 195 391 192 388 189 388 187 386 185 386 182 377 173 378 170 376 171 370 165 372 162 369 164 366 160 363 159 361 157 363 155 363 153 361 153 359 155 349 149 347 147 350 145 350 141 349 142 347 141 346 144 343 145 337 141 336 142 333 140 328 139 326 137 330 134 329 128 323 130 323 134 324 135 322 137 316 134 312 134 310 131 307 133 302 131 294 132 292 130 295 127 295 123 296 122 291 117 291 115 289 118 284 120 285 121 283 124 286 129 284 132 282 131 280 132 273 131 272 133 267 134 265 132 265 130 263 130 262 132 263 134 259 136 254 135 252 138 250 138 248 140 245 140 237 145 235 143 238 138 238 133 237 130 233 126 234 124 232 126 224 125 222 123 222 121 219 121 221 126 214 134 216 136 216 139 218 143 223 147 228 147 229 146 231 148 215 159 211 164 208 162 207 163 209 165 205 170 204 169 203 170 202 174 199 177 195 171 193 171 191 173 190 172 191 177 194 178 196 180 196 182 191 188 191 191 188 194 187 193 183 194 184 196 186 195 188 197 185 200 185 202 181 205 184 207 183 210 180 212 181 215 179 217 180 220 178 224 179 225 177 227 178 231 177 232 177 236 175 238 173 236 171 230 164 223 159 221 156 218 154 220 150 219 147 216 145 219 143 220 141 219 137 222 134 218 132 218 132 221 134 223 128 229 126 229 127 232 125 234 124 242 121 243 119 240 114 240 110 245 114 250 115 249 118 250 121 246 124 247 123 250 127 260 134 266 131 269 132 271 134 271 135 270 134 269 136 267 141 270 146 270 147 271 155 270 156 271 163 266 167 265 175 252 178 256 177 259 179 263 178 265 180 270 179 272 181 275 181 278 183 280 183 282 180 284 183 285 187 290 187 292 184 294 184 297 188 296 190 301 193 303 197 309 196 311 193 310 191 312 191 316 189 318 190 317 196 318 197 314 199 312 204 320 209 324 207 327 210 326 215 331 216 330 218 333 224 336 230 341 228 343 220 344 216 349 216 353 214 355 217 358 217 360 221 363 221 365 219 366 220 369 222 368 222 366 224 364 225 365 233 364 237 359 238 351 235 346 237 344 239 346 247 349 250 352 253 351 255 353 254 354 256 352 259 354 262 354 264 356 263 357 263 361 267 355 271 356 273 358 275 356 282 358 287 357 288 360 284 363 283 366 291 374 296 368 295 366 296 363 291 359 293 357 295 358 308 357 310 359 309 357 311 355 312 356 313 355 322 354 323 355 323 359 328 362 330 356 327 353 330 350 334 350 336 348 338 349 341 345 345 343 347 345 346 347 350 349 349 348 351 345 349 342 351 340 355 339 356 336 359 334 362 337 364 337 361 333 368 326 372 327 371 323 375 319 378 319 377 317 378 315 382 313 382 310 386 307 386 304 390 299 393 289 397 282 397 278 400 272 401 260 403 258 405 260 405 268 407 276 406 277 407 278 406 285 408 287 408 292 410 299 409 302 411 305 410 306 412 310 411 312 413 314 412 315 414 318 412 320 414 321 416 326 413 329 418 332 417 337 414 339 418 340 422 344 421 345 423 350 418 353 420 356 422 356 424 354 427 359 426 361 430 365 430 367 428 369 426 369 423 373 426 375 432 374 436 379 434 384 437 384 444 393 442 395 439 393 435 396 434 395 434 399 432 401 432 403 435 402 439 405 445 400 447 400 449 402 450 407 454 411 452 414 455 412 457 414 457 416 461 420 461 422 466 427 464 430 459 430 453 434 454 436 453 438 454 439 453 442 450 445 451 447 453 447 455 444 458 447 461 447 464 449 467 445 468 446 471 440 470 437 472 435 476 439 475 440 481 446 483 446ZM464 60 466 58 468 60 466 62Z"/></svg><canvas id="cf" width="482" height="512"></canvas></div>
<div class="a" style="left:0;top:0;width:1.4px;height:591px;background:linear-gradient(#f0f0f0 0,#eceef0 75px,#e4ecf3 76px,#dde6ee 100%)"></div>
<div class="a" style="left:1px;top:75px;width:482px;height:1.2px;background:#e6edf3"></div>
<div class="a" style="left:1.4px;top:76.2px;width:481px;height:1px;background:rgba(215,95,35,.55)"></div>
<div id="pp" class="a"></div>
<div id="jp" class="a"></div>
<div id="ju" class="a"><svg class="a" style="left:0;top:0" width="211" height="158" viewBox="0 0 211 158"><rect width="211" height="158" fill="#d66c36"/><g filter="url(#fa)"><path fill="#da7139" fill-rule="evenodd" d="M-2 15 -2 146 1 146 4 148 6 148 14 152 25 155 28 157 28 159 172 159 172 157 173 156 175 156 178 154 180 154 181 153 189 151 192 149 197 148 207 143 212 142 212 11 209 11 206 9 204 9 196 5 185 2 182 0 182 -2 38 -2 38 0 37 1 35 1 32 3 30 3 29 4 21 6 18 8 13 9 3 14Z"/><path fill="#dd763c" fill-rule="evenodd" d="M-2 23 -2 139 2 139 3 140 8 141 11 143 13 143 14 144 16 144 17 145 19 145 26 148 29 148 30 149 32 149 33 150 35 150 42 153 45 153 46 154 54 156 55 157 55 159 146 159 146 157 147 156 149 156 150 155 152 155 153 154 155 154 156 153 158 153 159 152 161 152 162 151 164 151 165 150 167 150 168 149 170 149 171 148 173 148 174 147 176 147 177 146 191 142 194 140 196 140 197 139 202 138 205 136 207 136 210 134 212 134 212 18 208 18 207 17 202 16 199 14 197 14 196 13 194 13 193 12 191 12 184 9 181 9 180 8 178 8 177 7 175 7 168 4 165 4 164 3 156 1 155 0 155 -2 64 -2 64 0 63 1 61 1 60 2 58 2 57 3 55 3 54 4 52 4 51 5 49 5 48 6 46 6 45 7 43 7 42 8 40 8 39 9 37 9 36 10 34 10 33 11 19 15 16 17 14 17 13 18 8 19 5 21 3 21 0 23Z"/><path fill="#e07b3f" fill-rule="evenodd" d="M-2 29 -2 132 0 132 1 133 3 133 4 134 6 134 7 135 9 135 16 138 19 138 26 141 29 141 36 144 39 144 40 145 42 145 49 148 52 148 53 149 55 149 62 152 65 152 72 155 75 155 76 156 78 156 79 157 79 159 124 159 124 157 127 155 130 155 131 154 133 154 134 153 136 153 137 152 139 152 140 151 142 151 143 150 145 150 146 149 148 149 149 148 151 148 152 147 154 147 155 146 157 146 158 145 160 145 161 144 163 144 164 143 166 143 167 142 169 142 170 141 172 141 173 140 175 140 176 139 178 139 185 136 188 136 189 135 203 131 209 128 212 128 212 25 210 25 209 24 207 24 206 23 204 23 203 22 201 22 194 19 191 19 184 16 181 16 174 13 171 13 170 12 168 12 161 9 158 9 157 8 155 8 148 5 145 5 138 2 135 2 134 1 132 1 131 0 131 -2 86 -2 86 0 83 2 80 2 79 3 77 3 76 4 74 4 73 5 71 5 70 6 68 6 67 7 65 7 64 8 62 8 61 9 59 9 58 10 56 10 55 11 53 11 52 12 50 12 49 13 47 13 46 14 44 14 43 15 41 15 40 16 38 16 37 17 35 17 34 18 32 18 25 21 22 21 21 22 7 26 1 29Z"/><path fill="#e37e42" fill-rule="evenodd" d="M-2 34 -2 127 1 127 8 130 11 130 15 132 18 132 19 133 26 134 30 136 33 136 40 139 43 139 44 140 46 140 47 141 49 141 50 142 52 142 53 143 55 143 62 146 65 146 66 147 68 147 69 148 71 148 72 149 74 149 81 152 89 153 90 154 95 154 96 155 108 155 109 154 114 154 115 153 118 153 122 151 125 151 131 148 139 146 142 144 150 142 153 140 155 140 156 139 158 139 159 138 161 138 162 137 164 137 171 134 174 134 178 132 181 132 185 130 188 130 192 128 195 128 196 127 198 127 199 126 201 126 208 123 212 123 212 30 209 30 202 27 199 27 195 25 192 25 191 24 184 23 180 21 177 21 170 18 167 18 166 17 164 17 163 16 161 16 160 15 158 15 157 14 155 14 148 11 145 11 144 10 142 10 141 9 139 9 138 8 136 8 129 5 121 4 120 3 115 3 114 2 102 2 101 3 96 3 95 4 92 4 88 6 85 6 79 9 71 11 68 13 60 15 57 17 55 17 54 18 52 18 51 19 49 19 48 20 46 20 39 23 36 23 32 25 29 25 25 27 22 27 18 29 15 29 14 30 12 30 11 31 9 31 2 34Z"/><path fill="#e48144" fill-rule="evenodd" d="M-2 39 -2 122 1 122 2 123 5 123 6 124 9 124 10 125 19 126 20 127 23 127 24 128 27 128 28 129 39 131 40 132 42 132 43 133 45 133 46 134 48 134 49 135 51 135 52 136 54 136 55 137 69 141 72 143 77 144 80 146 82 146 86 148 89 148 90 149 93 149 94 150 110 150 111 149 114 149 115 148 120 147 123 145 130 143 135 140 137 140 145 136 150 135 153 133 155 133 156 132 158 132 159 131 161 131 168 128 171 128 175 126 178 126 179 125 182 125 183 124 186 124 187 123 191 123 192 122 203 120 207 118 212 118 212 35 209 35 208 34 205 34 204 33 201 33 200 32 191 31 190 30 187 30 186 29 183 29 182 28 171 26 170 25 168 25 167 24 165 24 164 23 162 23 161 22 159 22 158 21 156 21 155 20 141 16 138 14 133 13 130 11 128 11 124 9 121 9 120 8 117 8 116 7 100 7 99 8 96 8 95 9 90 10 87 12 80 14 75 17 73 17 65 21 60 22 57 24 55 24 54 25 52 25 51 26 49 26 42 29 39 29 35 31 32 31 31 32 28 32 27 33 24 33 23 34 19 34 18 35 7 37 3 39Z"/><path fill="#e58347" fill-rule="evenodd" d="M212 39 208 39 207 38 203 38 202 37 197 37 196 36 191 36 190 35 185 35 184 34 180 34 179 33 172 32 171 31 165 30 164 29 153 26 150 24 145 23 142 21 140 21 137 19 135 19 130 16 128 16 125 14 123 14 117 11 113 11 112 10 103 10 102 11 96 12 91 15 89 15 65 27 63 27 60 29 58 29 57 30 55 30 54 31 52 31 51 32 49 32 42 35 39 35 38 36 35 36 34 37 30 37 29 38 25 38 24 39 19 39 18 40 8 41 7 42 4 42 3 43 -2 44 -2 118 2 118 3 119 7 119 8 120 13 120 14 121 19 121 20 122 25 122 26 123 30 123 31 124 38 125 39 126 45 127 46 128 57 131 60 133 65 134 68 136 70 136 73 138 75 138 80 141 82 141 85 143 87 143 93 146 97 146 98 147 107 147 108 146 114 145 119 142 121 142 145 130 147 130 150 128 152 128 153 127 155 127 156 126 158 126 159 125 161 125 168 122 171 122 172 121 175 121 176 120 180 120 181 119 185 119 186 118 191 118 192 117 202 116 203 115 206 115 207 114 212 113Z"/><path fill="#e68649" fill-rule="evenodd" d="M-2 47 -2 115 11 116 12 117 21 117 22 118 28 118 29 119 33 119 34 120 41 121 42 122 48 123 54 126 65 129 68 131 70 131 91 142 93 142 97 144 108 144 111 142 113 142 119 139 126 134 142 126 144 126 147 124 152 123 155 121 157 121 164 118 167 118 168 117 171 117 172 116 176 116 177 115 190 114 191 113 199 113 200 112 205 112 209 110 212 110 212 42 199 41 198 40 189 40 188 39 182 39 181 38 177 38 176 37 169 36 168 35 162 34 156 31 145 28 142 26 140 26 119 15 117 15 113 13 102 13 99 15 97 15 91 18 84 23 68 31 66 31 63 33 58 34 55 36 53 36 46 39 43 39 42 40 39 40 38 41 34 41 33 42 20 43 19 44 11 44 10 45 5 45 1 47Z"/><path fill="#e88a4c" fill-rule="evenodd" d="M-2 49 -2 112 0 112 1 113 29 114 30 115 39 116 40 117 42 117 43 118 45 118 46 119 60 123 63 125 68 126 82 133 89 138 98 142 107 142 115 138 129 128 141 122 143 122 151 118 153 118 154 117 156 117 157 116 159 116 166 113 174 112 175 111 182 111 183 110 201 110 202 109 212 108 212 45 210 45 209 44 181 43 180 42 171 41 170 40 168 40 167 39 165 39 164 38 150 34 147 32 142 31 128 24 121 19 112 15 103 15 95 19 81 29 69 35 67 35 59 39 57 39 56 40 54 40 53 41 51 41 44 44 36 45 35 46 28 46 27 47 9 47 8 48Z"/><path fill="#ea8f50" fill-rule="evenodd" d="M212 47 209 47 208 46 201 46 200 47 180 47 179 46 174 46 173 45 166 44 160 41 158 41 155 39 141 35 131 30 116 19 109 16 106 16 98 20 89 28 88 28 79 35 73 38 71 38 68 40 66 40 60 43 58 43 55 45 53 45 50 47 47 47 46 48 44 48 43 49 39 49 38 50 28 50 27 51 19 51 18 50 4 50 3 51 -2 52 -2 110 1 110 2 111 9 111 10 110 30 110 31 111 36 111 37 112 44 113 50 116 52 116 55 118 69 122 79 127 94 138 101 141 104 141 112 137 121 129 122 129 131 122 137 119 139 119 142 117 144 117 150 114 152 114 155 112 157 112 160 110 163 110 164 109 166 109 167 108 171 108 172 107 182 107 183 106 191 106 192 107 206 107 207 106 212 105Z"/></g><g filter="url(#fb)"><path fill="#ed9554" fill-rule="evenodd" d="M212 48 203 48 202 49 197 49 196 50 175 50 174 49 170 49 169 48 164 47 161 45 159 45 154 42 152 42 151 41 137 37 131 34 113 19 109 18 108 17 107 18 104 18 102 20 101 20 88 33 87 33 81 38 75 41 70 42 67 44 62 45 50 51 44 52 43 53 38 53 37 54 21 54 20 53 13 53 12 52 3 52 0 54 -2 54 -2 109 7 109 8 108 13 108 14 107 35 107 36 108 40 108 41 109 46 110 49 112 51 112 56 115 58 115 59 116 73 120 79 123 97 138 101 139 102 140 103 139 106 139 108 137 109 137 122 124 123 124 129 119 135 116 140 115 143 113 148 112 160 106 166 105 167 104 172 104 173 103 189 103 190 104 197 104 198 105 207 105 210 103 212 103Z"/><path fill="#f09d5a" fill-rule="evenodd" d="M212 50 209 50 208 49 207 50 204 50 200 52 197 52 196 53 191 53 190 54 173 54 172 53 169 53 168 52 163 51 153 45 151 45 147 43 139 42 130 38 114 22 113 22 110 19 105 19 96 28 96 29 92 33 92 34 87 39 76 45 73 45 72 46 66 47 51 55 49 55 45 57 41 57 40 58 29 58 28 57 19 57 18 56 15 56 14 55 11 55 10 54 7 54 5 53 4 54 2 54 0 56 -2 56 -2 107 1 107 2 108 3 107 6 107 10 105 13 105 14 104 19 104 20 103 37 103 38 104 41 104 42 105 47 106 57 112 59 112 63 114 71 115 80 119 96 135 97 135 100 138 105 138 114 129 114 128 118 124 118 123 123 118 134 112 137 112 138 111 144 110 159 102 161 102 165 100 169 100 170 99 181 99 182 100 191 100 192 101 195 101 196 102 199 102 200 103 203 103 205 104 206 103 208 103 210 101 212 101Z"/><path fill="#f3a661" fill-rule="evenodd" d="M212 51 206 51 197 56 193 56 192 57 185 57 184 58 171 58 157 52 151 47 149 47 148 46 140 46 139 45 135 45 129 42 123 37 118 29 111 22 111 21 107 19 98 29 94 37 86 45 80 48 66 50 55 58 51 59 48 61 44 61 43 62 33 62 32 61 26 61 25 60 18 60 7 55 3 55 0 58 -2 58 -2 106 4 106 13 101 17 101 18 100 25 100 26 99 39 99 53 105 59 110 61 110 62 111 70 111 71 112 75 112 81 115 87 120 92 128 99 135 99 136 103 138 112 128 116 120 124 112 130 109 144 107 155 99 159 98 162 96 166 96 167 95 177 95 178 96 184 96 185 97 192 97 203 102 207 102 210 99 212 99Z"/><path fill="#f6af69" fill-rule="evenodd" d="M212 51 208 51 203 54 200 57 196 58 195 59 187 59 186 60 183 60 182 61 177 61 176 62 174 61 169 61 158 56 151 49 149 48 134 48 133 47 129 46 121 39 121 38 119 36 119 34 117 30 111 24 109 20 106 20 103 26 99 30 99 32 98 33 96 40 88 48 82 51 79 51 78 52 73 52 72 51 66 52 58 60 50 64 47 64 46 65 41 65 40 66 39 65 33 65 29 63 20 63 19 62 16 62 9 57 4 55 0 60 -2 60 -2 106 2 106 7 103 10 100 14 99 15 98 23 98 24 97 27 97 28 96 33 96 34 95 36 96 41 96 52 101 59 108 61 109 76 109 77 110 81 111 89 118 89 119 91 121 91 123 93 127 99 133 101 137 104 137 107 131 111 127 111 125 112 124 114 117 122 109 128 106 131 106 132 105 137 105 138 106 144 105 152 97 160 93 163 93 164 92 169 92 170 91 171 92 177 92 181 94 190 94 191 95 194 95 201 100 206 102 210 97 212 97Z"/><path fill="#f8b875" fill-rule="evenodd" d="M212 52 208 52 206 53 199 60 197 61 186 61 181 64 178 64 177 65 172 65 171 64 168 64 156 58 149 49 146 49 142 51 133 51 123 46 120 43 117 37 117 33 116 31 111 26 109 21 107 20 105 23 105 25 100 31 100 36 99 37 99 40 97 44 91 50 81 55 77 55 76 54 73 54 72 53 67 53 59 63 53 66 51 66 48 68 45 68 44 69 38 69 37 68 31 67 29 65 27 65 26 64 24 64 23 65 18 65 17 64 13 63 6 56 3 56 3 58 1 60 1 62 0 63 -2 63 -2 105 2 105 4 104 11 97 13 96 24 96 29 93 32 93 33 92 38 92 39 93 42 93 54 99 61 108 64 108 68 106 77 106 87 111 90 114 93 120 93 124 94 126 99 131 101 136 103 137 105 134 105 132 110 126 110 121 111 120 111 117 113 113 119 107 129 102 133 102 134 103 137 103 138 104 143 104 151 94 157 91 159 91 162 89 165 89 166 88 172 88 173 89 179 90 181 92 183 92 184 93 186 93 187 92 192 92 193 93 197 94 204 101 207 101 207 99 209 97 209 95 210 94 212 94Z"/><path fill="#fac583" fill-rule="evenodd" d="M212 53 208 52 204 56 204 58 198 63 191 63 190 62 187 62 184 65 180 67 176 67 175 68 168 67 163 63 156 61 152 57 149 50 146 50 140 54 133 54 126 50 122 49 118 45 116 41 116 37 115 36 116 32 111 28 110 26 110 23 108 21 107 21 104 28 101 31 101 43 97 49 91 52 87 56 83 58 78 58 68 53 66 55 63 63 60 66 56 67 55 68 52 68 45 72 39 72 38 71 35 71 31 69 26 65 22 66 21 67 17 67 16 66 14 66 10 62 10 61 5 56 4 56 2 60 2 64 0 67 -2 67 -2 104 2 105 6 101 6 99 12 94 19 94 20 95 23 95 26 92 30 90 34 90 35 89 42 90 47 94 54 96 58 100 61 107 64 107 70 103 77 103 84 107 88 108 92 112 94 116 94 120 95 121 94 125 99 129 100 131 100 134 102 136 103 136 106 129 109 126 109 114 113 108 119 105 123 101 127 99 132 99 142 104 144 102 147 94 150 91 154 90 155 89 158 89 165 85 171 85 172 86 175 86 179 88 184 92 188 91 189 90 193 90 194 91 196 91 200 95 200 96 205 101 206 101 208 97 208 93 210 90 212 90Z"/><path fill="#fdd493" fill-rule="evenodd" d="M212 54 210 54 209 52 205 56 205 59 204 61 202 63 196 66 193 66 188 62 182 69 177 69 174 71 171 71 165 68 162 64 156 64 154 63 150 58 150 54 148 50 144 52 144 53 140 57 132 57 127 52 121 52 119 50 118 50 116 48 114 44 114 40 115 39 114 38 114 34 115 32 110 28 109 26 109 23 108 21 107 21 106 22 106 26 105 28 102 31 101 31 101 33 103 35 103 46 97 53 91 54 90 57 86 61 83 61 82 62 77 61 72 56 68 54 66 58 66 63 61 69 59 70 53 69 48 74 46 74 45 75 39 75 34 72 31 72 26 66 21 69 17 69 16 68 12 67 10 65 9 61 5 57 4 57 2 61 3 62 3 67 1 69 -2 69 -2 103 0 103 1 105 5 101 5 98 6 96 8 94 14 91 17 91 22 95 28 88 33 88 36 86 39 86 45 89 48 93 54 93 56 94 60 99 60 103 62 107 66 105 66 104 70 100 78 100 83 105 89 105 91 107 92 107 94 109 96 113 96 117 95 118 96 119 96 123 95 125 100 129 101 131 101 134 102 136 103 136 104 135 104 131 105 129 108 126 109 126 109 124 107 122 107 111 113 104 119 103 120 100 124 96 127 96 128 95 133 96 138 101 142 103 144 99 144 94 149 88 151 87 157 88 162 83 164 83 165 82 171 82 176 85 179 85 184 91 189 88 193 88 194 89 198 90 200 92 201 96 205 100 206 100 208 96 207 95 207 90 209 88 212 88Z"/><path fill="#ffe5a3" fill-rule="evenodd" d="M212 56 210 56 209 55 209 53 206 56 206 60 205 62 202 65 199 65 196 68 193 68 189 63 187 63 186 68 184 70 182 71 178 70 174 73 170 73 168 71 165 70 161 65 155 66 152 63 151 63 149 61 149 53 148 51 144 53 144 55 141 59 137 59 136 60 131 60 129 58 128 54 127 53 125 53 122 55 119 54 117 52 117 51 113 48 113 46 112 45 113 44 113 41 114 40 113 38 113 35 115 32 113 32 110 29 109 27 109 23 107 22 106 23 107 26 105 28 105 30 104 31 102 31 102 33 104 35 105 47 102 50 100 54 98 55 92 55 91 61 88 64 77 64 74 61 73 58 68 55 67 57 68 65 67 67 61 72 57 72 53 70 52 71 52 73 50 75 48 76 45 76 44 77 39 77 34 73 32 74 30 73 27 70 27 68 26 67 25 67 21 71 18 71 16 69 12 69 8 64 8 60 7 60 4 57 4 59 3 60 3 62 4 63 4 68 2 70 -2 70 -2 101 0 101 1 102 1 104 4 101 4 97 5 95 8 92 11 92 14 89 17 89 21 94 23 94 24 89 26 87 28 86 32 87 36 84 40 84 42 86 45 87 49 92 55 91 58 94 59 94 61 96 61 104 62 106 66 104 66 102 69 98 73 98 74 97 79 97 81 99 82 103 83 104 85 104 88 102 91 103 93 105 93 106 97 109 97 111 98 112 97 113 97 116 96 117 97 119 97 122 95 125 97 125 100 128 101 130 101 134 103 135 104 134 103 131 105 129 105 127 106 126 108 126 108 124 106 122 105 110 108 107 110 103 112 102 118 102 119 96 122 93 133 93 136 96 137 99 142 102 143 100 142 92 143 90 149 85 153 85 157 87 158 86 158 84 160 82 162 81 165 81 166 80 171 80 176 84 178 83 180 84 183 87 183 89 184 90 185 90 189 86 192 86 194 88 198 88 202 93 202 97 203 97 206 100 206 98 207 97 207 95 206 94 206 89 208 87 212 87Z"/></g><g filter="url(#fc)"><path fill="#feeeb3" fill-rule="evenodd" d="M212 56 210 56 208 54 206 56 206 62 202 66 200 65 199 66 199 68 197 70 196 69 192 69 190 67 190 65 188 63 187 64 187 69 186 70 185 70 183 72 178 71 178 72 175 74 169 74 166 71 164 71 161 68 161 65 160 65 157 68 156 67 155 68 151 64 149 64 147 61 147 59 149 55 148 51 146 53 145 53 144 58 141 61 138 61 137 60 134 63 132 63 127 59 127 54 125 54 122 57 120 57 118 56 116 54 116 52 112 49 111 47 111 44 113 40 112 35 114 33 114 32 112 32 110 30 110 29 108 27 108 22 107 22 107 27 106 29 103 32 102 32 105 35 105 37 104 38 106 41 107 46 103 51 103 54 101 56 99 57 97 57 94 55 92 56 94 62 89 67 86 67 83 65 82 65 80 67 76 66 73 63 73 60 72 58 68 56 67 59 69 62 69 67 66 70 64 70 62 74 57 74 55 72 55 71 53 71 53 74 50 77 46 77 43 79 40 79 38 77 36 77 35 76 35 74 33 74 32 75 29 74 26 71 26 67 22 72 20 72 19 73 18 73 15 69 14 70 11 70 8 67 8 62 6 59 4 59 3 61 5 64 5 68 3 71 -2 71 -2 92 0 92 1 93 1 97 0 98 -2 98 -2 101 0 101 2 103 4 101 4 95 8 91 10 92 11 91 11 89 13 87 14 88 18 88 20 90 20 92 22 94 23 93 23 88 24 87 25 87 27 85 32 86 32 85 35 83 41 83 44 86 46 86 49 89 49 92 50 92 53 89 54 90 55 89 59 93 61 93 63 96 63 98 61 102 62 106 64 104 65 104 66 99 69 96 72 96 73 97 76 94 78 94 83 98 83 103 85 103 88 100 90 100 92 101 94 103 94 105 98 108 99 110 99 113 97 117 98 122 96 124 96 125 98 125 100 127 100 128 102 130 102 135 103 135 103 130 104 128 107 125 108 125 105 122 105 120 106 119 104 116 103 111 107 106 107 103 109 101 111 100 113 100 116 102 118 101 116 95 121 90 124 90 127 92 128 92 130 90 134 91 137 94 137 97 138 99 142 101 143 98 141 95 141 90 144 87 146 87 148 83 153 83 155 85 155 86 157 86 157 83 160 80 164 80 167 78 170 78 172 80 174 80 175 81 175 83 177 83 178 82 181 83 184 86 184 90 188 85 190 85 191 84 192 84 195 88 196 87 199 87 202 90 202 95 204 98 206 98 207 96 205 93 205 89 207 86 212 86 212 65 210 65 209 64 209 60 210 59 212 59Z"/><path fill="#f9f6c8" fill-rule="evenodd" d="M212 57 210 57 208 55 207 56 207 62 203 67 200 66 200 69 198 71 196 70 192 70 190 68 189 64 188 64 187 65 188 66 188 69 186 71 185 71 184 73 181 73 179 71 176 75 174 74 173 75 169 75 166 72 162 71 160 69 161 66 160 66 158 68 153 69 152 68 152 65 149 65 146 61 148 57 148 53 145 53 145 59 144 60 143 60 141 62 138 62 137 61 136 62 136 64 132 66 130 64 130 63 128 63 126 61 126 58 127 57 127 55 126 54 123 58 119 58 118 57 116 57 115 56 115 52 113 52 111 50 110 45 111 44 111 41 113 39 111 37 111 35 114 32 112 33 109 30 108 27 107 27 106 28 106 30 104 32 103 32 106 35 105 39 107 41 108 46 106 50 104 51 104 55 102 56 102 57 100 59 98 59 95 56 93 56 93 58 95 60 96 63 92 67 92 69 90 71 86 70 83 66 82 66 82 67 80 69 78 69 73 65 72 63 72 59 70 57 68 57 68 60 71 65 70 66 70 68 67 71 65 70 64 71 65 72 65 74 63 76 58 76 54 71 53 72 54 74 52 77 50 78 46 78 44 80 40 80 38 78 36 78 34 76 34 74 32 76 30 76 26 72 26 68 25 68 25 70 22 73 20 73 19 74 17 74 15 72 15 70 11 71 7 67 7 61 5 59 4 60 4 62 6 66 5 70 3 72 1 71 -2 71 -2 73 0 73 1 74 0 75 -2 75 -2 91 0 91 2 93 2 96 0 99 -2 99 -2 100 0 100 2 102 3 101 3 95 7 90 10 91 10 88 12 86 14 87 18 87 20 89 21 93 22 93 23 92 22 91 22 88 24 86 25 86 26 84 29 84 31 86 34 82 36 83 37 82 41 82 44 85 48 86 50 88 49 91 50 91 52 89 57 88 58 89 58 92 61 92 64 96 62 100 62 104 65 104 65 98 66 97 67 97 69 95 72 95 73 96 74 95 74 93 78 91 80 93 80 94 82 94 84 96 84 99 83 100 83 102 84 103 87 99 91 99 92 100 94 100 95 101 95 105 97 105 99 107 100 112 99 113 99 116 97 118 99 120 99 122 96 125 98 124 101 127 102 130 103 130 104 129 104 127 106 125 107 125 104 122 105 118 103 116 102 111 104 107 106 106 106 102 108 101 108 100 110 98 112 98 115 101 117 101 117 99 115 97 114 94 118 90 118 88 120 86 124 87 127 91 128 91 128 90 130 88 132 88 137 92 138 94 138 98 140 100 142 100 142 97 139 92 140 91 140 89 143 86 145 87 146 86 145 85 145 83 147 81 152 81 156 86 157 85 156 83 158 80 160 79 164 79 166 77 170 77 172 79 174 79 176 81 176 83 178 81 180 81 184 85 184 89 185 89 185 87 188 84 190 84 191 83 193 83 195 85 195 87 199 86 203 90 203 96 205 98 206 97 206 95 204 91 205 87 207 85 209 86 212 86 212 84 210 84 209 83 210 82 212 82 212 66 210 66 208 64 208 61 210 58 212 58Z"/><path fill="#e2f6e8" fill-rule="evenodd" d="M2 96 1 100 3 101 3 97ZM207 56 207 60 208 61 209 57ZM212 68 210 68 207 63 204 67 201 67 201 70 199 73 196 73 195 72 195 70 194 71 191 71 189 68 189 65 188 64 189 69 187 72 186 72 184 74 180 74 179 73 176 76 175 75 173 76 170 76 166 73 163 73 162 71 160 70 160 67 159 69 156 69 154 71 151 68 151 66 148 66 146 62 146 58 148 55 148 53 146 53 146 58 143 61 143 62 139 64 137 63 137 65 135 66 133 69 132 69 129 66 129 64 126 64 125 63 125 58 126 57 126 55 125 57 121 60 119 59 115 59 114 58 114 56 113 55 114 52 113 53 111 51 111 49 109 47 109 45 111 41 111 38 110 37 112 33 111 33 109 31 109 29 107 28 105 33 107 35 106 39 109 46 107 48 107 50 105 51 105 56 103 57 101 60 98 60 94 56 93 56 93 57 97 61 97 65 93 67 95 69 95 71 91 75 90 75 88 73 88 72 85 72 83 70 84 68 83 67 82 67 82 69 81 70 77 70 72 65 72 61 71 60 71 58 68 57 68 59 70 61 70 63 72 65 70 68 70 70 68 72 65 71 66 75 64 78 61 78 60 77 56 76 54 74 55 73 54 72 54 76 51 79 46 79 45 80 40 81 39 79 35 78 34 77 34 75 30 77 25 72 25 69 25 71 23 73 21 73 21 74 19 76 18 76 14 72 10 72 7 68 7 62 6 60 5 60 4 61 7 66 7 67 5 69 5 71 3 73 2 73 0 71 -2 71 -2 72 1 72 2 73 1 77 0 78 -2 78 -2 89 0 89 3 94 6 90 9 90 9 87 11 84 14 84 15 85 15 87 16 86 19 86 21 89 21 92 22 93 21 88 23 85 24 85 26 83 30 83 31 84 34 81 35 82 37 81 40 81 44 84 47 84 48 86 50 87 50 90 51 88 54 88 56 86 59 89 59 91 62 91 64 95 64 99 62 102 62 104 64 104 64 99 67 96 67 95 71 93 73 94 73 92 75 91 77 88 78 88 81 91 81 93 84 93 85 94 85 99 84 100 84 102 85 100 89 97 91 98 95 98 96 99 96 101 97 102 96 105 97 104 99 106 99 108 101 110 101 112 99 116 99 119 100 120 98 124 99 124 101 126 101 128 103 129 105 124 103 122 104 118 101 111 103 109 103 107 105 106 105 101 107 100 109 97 112 97 116 101 117 101 117 100 113 96 113 92 117 90 115 88 115 86 119 82 120 82 122 84 122 85 125 85 127 87 126 89 127 90 128 90 128 88 129 87 133 87 138 92 138 96 139 97 139 99 142 100 142 98 140 96 140 94 138 92 140 89 140 87 142 85 145 86 144 82 146 79 149 79 150 80 154 81 156 83 155 84 156 85 156 81 159 78 164 78 165 77 170 76 171 78 175 79 176 80 176 82 180 80 185 85 185 88 185 86 187 84 189 84 189 83 191 81 192 81 196 85 200 85 203 89 203 95 204 97 205 97 206 96 203 91 203 90 205 88 205 86 207 84 208 84 210 86 212 86 212 85 209 85 208 84 209 80 210 79 212 79Z"/><path fill="#b4e3fc" fill-rule="evenodd" d="M101 113 100 114 100 117 99 118 100 119 100 122 99 124 102 126 102 128 103 129 104 123 102 122 104 119 102 117ZM2 97 1 99 2 101 3 100 3 98ZM139 94 139 98 141 99ZM-2 88 1 88 2 89 2 92 3 93 6 89 8 89 9 84 10 82 12 81 13 83 14 83 16 85 19 85 21 88 21 90 21 86 23 85 26 81 30 82 31 83 33 81 38 81 39 80 33 77 30 78 25 73 25 72 23 74 21 74 20 77 18 78 14 73 10 73 7 68 6 69 6 71 2 76 2 79 0 81 -2 81ZM212 69 209 69 208 68 208 65 207 64 204 68 202 68 201 73 200 75 198 76 197 74 196 74 194 72 191 72 189 69 189 67 189 71 187 72 184 76 180 75 179 74 177 76 172 76 171 77 177 80 180 79 185 84 185 85 187 83 189 83 190 80 192 79 196 84 200 84 203 89 204 88 204 86 208 81 208 78 210 76 212 76ZM69 58 71 63 71 59ZM208 56 207 57 207 59 208 60 209 58ZM168 75 167 75 165 73 162 73 159 70 156 70 154 72 153 72 150 67 146 65 145 61 144 61 144 62 140 65 138 64 138 66 136 68 134 72 132 73 128 68 128 66 124 63 124 59 121 61 119 60 113 61 112 60 112 57 113 56 112 55 113 53 112 53 110 51 110 49 108 48 106 52 106 54 107 55 103 58 103 60 102 61 98 61 97 60 98 66 96 68 96 69 98 71 96 73 95 73 97 77 92 81 89 78 87 74 85 74 82 70 81 71 77 71 76 72 75 71 75 69 72 66 71 67 71 70 68 73 66 72 67 73 67 76 64 82 61 79 57 78 56 76 54 76 51 81 49 80 46 80 45 81 42 81 42 82 43 82 45 84 48 84 51 87 54 87 56 85 57 85 60 90 64 92 65 96 66 96 66 95 70 92 72 93 72 91 74 89 76 85 78 84 82 89 82 91 86 94 86 98 89 96 91 97 97 96 98 97 98 100 97 101 98 102 97 104 98 104 100 106 100 108 102 109 104 105 104 103 103 102 107 99 107 97 108 96 112 96 113 97 112 91 114 89 114 88 112 86 114 84 115 84 113 80 118 76 121 79 123 83 125 83 128 87 129 86 133 86 134 85 135 86 135 88 138 91 139 90 139 87 142 84 144 85 143 84 143 81 146 75 149 78 153 79 154 81 156 81 159 76 161 77 164 77 165 76 168 76ZM107 28 106 34 108 35 106 38 108 40 109 44 110 43 110 40 111 39 110 38 110 35 111 33 108 31 108 29Z"/><path fill="#76b6fc" fill-rule="evenodd" d="M101 115 100 117 100 119 101 120 100 124 102 126 102 128 104 124 103 124 101 122 103 120 103 119 101 117ZM-2 88 2 87 3 88 3 92 3 91 8 87 8 81 11 78 13 78 14 79 13 80 14 83 16 84 19 84 20 85 22 85 23 84 24 80 25 79 26 79 29 82 31 82 33 80 35 80 36 81 38 80 36 80 34 78 31 78 30 79 25 75 25 73 21 75 21 77 18 80 13 73 8 74 7 73 8 72 8 70 6 69 7 71 5 72 5 73 3 75 3 81 0 84 -2 84ZM212 69 208 70 207 69 207 65 207 66 202 70 202 76 199 79 197 79 196 78 197 77 196 74 194 73 191 73 190 72 188 72 187 73 186 77 185 78 184 78 181 75 179 75 177 77 175 77 174 76 172 77 174 77 176 79 179 79 180 78 185 82 185 84 189 82 189 80 192 77 197 84 202 83 203 84 202 85 202 87 204 88 203 86 205 85 205 84 207 82 207 76 210 73 212 73ZM166 75 165 74 162 74 161 72 159 71 156 71 153 75 151 72 150 68 148 67 145 67 144 66 145 65 145 62 144 62 143 64 141 65 138 65 138 67 136 71 137 74 136 75 134 75 133 77 130 77 129 76 129 71 127 68 127 66 123 65 122 64 123 60 122 61 116 61 111 64 110 62 108 61 108 60 110 59 112 56 112 54 109 52 109 49 108 49 108 50 106 52 108 56 104 58 102 62 98 61 99 63 99 66 97 68 97 69 99 71 98 75 100 77 100 80 99 81 96 81 95 80 96 81 96 84 94 86 92 84 90 86 89 86 87 84 88 83 88 78 86 76 86 75 82 73 82 71 81 72 77 72 75 73 74 72 74 68 72 67 72 70 69 73 68 73 68 76 67 77 67 81 68 82 64 85 62 84 61 80 57 79 55 77 52 80 52 82 51 83 50 83 48 80 44 82 45 83 48 83 49 85 51 86 54 86 57 82 59 85 60 89 62 90 65 90 66 91 65 92 65 95 66 95 67 93 69 92 72 92 72 90 74 86 73 83 74 82 76 82 77 80 80 80 81 81 81 86 83 89 83 91 87 92 88 93 87 97 88 96 94 96 99 93 100 95 102 96 102 97 100 98 98 101 98 103 101 105 101 108 102 108 102 107 104 105 102 101 106 99 108 95 112 96 111 94 111 91 113 89 113 88 111 86 112 82 110 80 110 77 111 76 114 76 115 77 114 76 114 73 116 71 118 73 120 71 121 71 123 73 122 74 122 79 124 81 124 82 128 84 128 86 129 85 133 85 135 84 136 85 136 89 138 90 138 87 141 84 142 84 142 81 143 80 143 76 142 75 146 72 148 73 149 77 153 78 155 80 158 77 158 75 159 74 160 74 162 77ZM108 29 106 33 107 33 109 35 107 37 107 38 109 40 109 42 110 40 110 38 109 37 110 33 108 31Z"/><path fill="#67a9f8" fill-rule="evenodd" d="M48 81 46 81 45 83 48 82ZM165 74 162 75 162 76 164 76ZM-2 87 1 87 3 86 5 89 5 88 7 87 8 85 7 84 7 80 12 76 14 76 15 77 14 82 17 84 19 83 22 84 23 83 23 79 24 78 27 78 29 81 31 81 33 79 34 79 32 78 32 79 30 81 28 79 28 77 25 76 24 74 22 75 21 79 18 82 17 82 15 80 16 78 13 74 7 75 6 74 7 72 6 72 4 76 4 82 1 85 -2 85ZM212 70 209 70 207 71 205 68 205 69 203 70 202 72 203 73 203 77 198 81 196 81 195 80 196 75 193 73 191 74 188 73 187 74 187 78 186 79 183 79 181 76 179 76 177 78 176 78 178 79 178 78 180 76 182 78 182 80 185 81 186 83 188 82 189 78 192 75 193 75 195 77 194 79 197 83 203 82 204 83 203 85 204 85 206 81 206 75 209 72 212 72ZM161 73 157 71 155 75 153 77 152 77 150 75 151 74 151 71 148 68 144 68 142 66 145 64 144 64 141 66 139 66 138 70 137 71 138 73 138 76 137 77 135 76 135 78 134 79 128 80 125 77 127 75 128 75 128 71 125 66 122 66 121 65 121 62 115 62 111 66 110 66 109 65 109 63 108 63 106 61 106 60 108 58 110 58 111 57 111 54 107 52 107 53 109 54 110 56 109 57 107 57 104 60 102 64 101 64 100 62 99 62 100 63 100 66 101 67 100 68 98 68 98 69 101 72 99 73 99 74 101 76 101 78 103 82 101 84 99 82 97 82 98 85 95 88 92 87 90 89 87 88 84 85 87 82 87 79 85 77 85 76 83 74 82 75 80 73 77 73 75 75 74 75 72 73 73 71 73 68 72 68 73 70 68 76 68 80 69 81 69 83 68 84 66 84 66 85 64 87 60 85 61 81 60 81 58 79 54 79 53 80 53 82 51 84 49 84 53 86 55 82 57 80 58 80 60 82 59 83 59 86 62 89 66 89 68 91 65 93 66 93 69 91 71 91 72 87 73 86 72 84 72 81 73 80 75 81 75 79 76 78 82 77 85 80 83 82 82 82 82 86 85 91 88 91 89 92 89 95 95 95 99 91 100 91 101 92 101 94 102 94 104 96 104 97 102 99 100 99 99 100 99 103 103 105 103 104 101 103 100 101 101 100 103 100 106 97 108 93 109 93 110 95 111 95 110 94 110 91 109 90 110 89 112 89 112 88 109 85 111 84 111 83 109 81 109 79 107 75 109 73 111 75 113 75 112 72 115 69 118 70 120 68 123 69 126 72 123 75 123 78 125 80 125 81 127 83 128 82 130 84 133 84 135 82 136 82 138 84 137 86 137 89 138 89 137 87 142 81 142 77 141 76 141 74 142 73 144 73 144 72 146 70 150 72 149 76 150 76 152 78 156 78 157 77 157 75 159 73Z"/></g></svg><canvas id="cj" width="211" height="158"></canvas></div>

<!-- title bar -->
<div class="t c" style="left:300px;width:100px;top:2px;font-weight:bold;font-size:8.4px;color:#111">Fraqtive</div>
<svg class="a" style="left:3px;top:2px" width="30" height="13" viewBox="0 0 30 13">
<defs><radialGradient id="gi" cx="0.5" cy="0.5" r="0.7"><stop offset="0" stop-color="#fbd9a0"/><stop offset="0.6" stop-color="#e88a3c"/><stop offset="1" stop-color="#c8581c"/></radialGradient>
<radialGradient id="gb" cx="0.5" cy="0.4" r="0.6"><stop offset="0" stop-color="#ffffff"/><stop offset="1" stop-color="#cfccca"/></radialGradient></defs>
<rect x="0.5" y="0.5" width="11.5" height="11.5" fill="url(#gi)"/>
<path d="M11.9 6.2 C11.9 3.4 9.4 2.6 7.6 3.4 C6.6 3.9 6.2 5 6.1 5.3 A1.5 1.5 0 1 0 6.1 7.1 C6.2 7.4 6.6 8.5 7.6 9 C9.4 9.8 11.9 9 11.9 6.2Z" fill="#000"/><circle cx="8.2" cy="2.9" r="0.8" fill="#000"/><circle cx="8.2" cy="9.5" r="0.8" fill="#000"/><rect x="0.8" y="5.9" width="3" height="0.6" fill="#000"/>
<circle cx="22.6" cy="5.5" r="5.1" fill="url(#gb)" stroke="#aeaaa7" stroke-width="0.8"/><circle cx="22.6" cy="5.5" r="0.7" fill="#a5a19e"/>
</svg>
<svg class="a" style="left:650px;top:1px" width="48" height="13" viewBox="0 0 48 13">
<g fill="url(#gb)" stroke="#a39f9c" stroke-width="0.8"><circle cx="7.7" cy="6" r="4.9"/><circle cx="24" cy="6" r="4.9"/><circle cx="39.7" cy="6" r="4.9"/></g>
<g fill="none" stroke="#222" stroke-width="1.3" stroke-linecap="round" stroke-linejoin="round"><path d="M5.5 5.2 L7.7 7.4 L9.9 5.2"/><path d="M21.8 7 L24 4.8 L26.2 7"/><path d="M37.7 4 L41.7 8 M41.7 4 L37.7 8"/></g>
</svg>
<!-- toolbar -->
<div class="a" style="left:344px;top:21px;width:39px;height:38px;border:1px solid #b5b1ae;border-radius:3px;background:linear-gradient(#cfcbc8,#d6d3d0);box-sizing:border-box"></div>
<div class="a" style="left:137px;top:20px;width:1px;height:52px;background:#d3d0cd;border-right:1px solid #e6e4e2"></div>
<div class="a" style="left:340px;top:20px;width:1px;height:52px;background:#d3d0cd;border-right:1px solid #e6e4e2"></div>
<div class="a" style="left:467px;top:20px;width:1px;height:52px;background:#d3d0cd;border-right:1px solid #e6e4e2"></div>
<div class="t c" style="left:-7px;width:60px;top:39px">Save<br>Image</div>
<div class="t c" style="left:36px;width:60px;top:39px">Generate<br>Image</div>
<div class="t c" style="left:82px;width:60px;top:39px">Generate<br>Series</div>
<div class="t c" style="left:131px;width:60px;top:39px">Copy<br>Image</div>
<div class="t c" style="left:171px;width:60px;top:39px">Fractal<br>Type</div>
<div class="t c" style="left:213px;width:60px;top:39px">Edit<br>Gradient</div>
<div class="t" style="left:282px;top:25px">Load Preset</div>
<div class="t" style="left:282px;top:45px">Save Preset</div>
<div class="t c" style="left:333px;width:60px;top:39px">2D<br>View</div>
<div class="t c" style="left:373px;width:60px;top:39px">3D<br>View</div>
<div class="t c" style="left:413px;width:60px;top:39px">Full<br>Screen</div>
<div class="t c" style="left:38px;width:60px;top:64px">File</div>
<div class="t c" style="left:208px;width:60px;top:64px">Edit</div>
<div class="t c" style="left:373px;width:60px;top:64px">View</div>
<div class="t" style="left:474px;top:60px;font-weight:bold;font-size:11px">&#187;</div>
<!-- properties -->
<div class="t" style="left:489px;top:79px">Properties</div>
<div class="t" style="left:507px;top:99px;font-weight:bold;font-size:8.6px;color:#111">Parameters</div>
<div class="lb" style="top:118px">Fractal Type</div><div class="hl" style="top:128px"></div>
<div class="in" style="left:501px;top:133px;width:167px"><span style="left:3px">Mandelbrot (Normal), N=2</span></div>
<div class="bt" style="left:672px;top:133px;width:16px">...</div>
<div class="lb" style="top:150px">Julia Parameters</div><div class="hl" style="top:160px"></div>
<div class="t" style="left:500px;top:166px">X:</div><div class="in" style="left:511px;top:166px;width:78px"><span style="left:1px;letter-spacing:.1px">-1.2900749683352</span></div>
<div class="t" style="left:600px;top:166px">Y:</div><div class="in" style="left:610px;top:166px;width:78px"><span style="right:1.5px;letter-spacing:.1px">0.064634115303136</span></div>
<div class="lb" style="top:182px">View Position</div><div class="hl" style="top:192px"></div>
<div class="t" style="left:500px;top:198px">X:</div><div class="in" style="left:511px;top:197px;width:78px"><span style="left:1px;letter-spacing:.1px">-1.1085712758438</span></div>
<div class="t" style="left:600px;top:198px">Y:</div><div class="in" style="left:610px;top:197px;width:78px"><span style="right:1.5px;letter-spacing:.1px">0.027718110050649</span></div>
<div class="lb" style="top:214px">Zoom Factor</div><div class="hl" style="top:223px"></div>
<div class="in" style="left:621px;top:228px;width:67px"><span style="left:1.5px">10^-0,05</span></div>
<div class="lb" style="top:245px">Rotation Angle</div><div class="hl" style="top:255px"></div>
<div class="in" style="left:621px;top:260px;width:67px"><span style="left:1.5px">0,0 deg</span></div>
<div class="lb" style="top:277px">Default Position</div><div class="hl" style="top:287px"></div>
<div class="bt" style="left:642px;top:291px;width:46px">Restore</div>
<div class="lb" style="top:309px">Bookmarks</div><div class="hl" style="top:319px"></div>
<div class="bt" style="left:601px;top:324px;width:42px">Load...</div>
<div class="bt" style="left:647px;top:324px;width:41px">Save...</div>
<div class="t" style="left:508px;top:352px">Color Settings</div>
<div class="t" style="left:507px;top:372px">Advanced Settings</div>
<div class="t" style="left:507px;top:391px">Animation</div>
<div class="t" style="left:489px;top:415px">Julia Preview</div>
<!-- icons -->
<svg class="a" style="left:0;top:18px" width="480" height="42" viewBox="0 18 480 42">
<defs>
<linearGradient id="fl" x1="0" y1="0" x2="0" y2="1"><stop offset="0" stop-color="#8a8cc6"/><stop offset="0.5" stop-color="#4a4c9c"/><stop offset="1" stop-color="#2c2c72"/></linearGradient>
<linearGradient id="pg" x1="0" y1="0" x2="1" y2="1"><stop offset="0" stop-color="#ffffff"/><stop offset="1" stop-color="#e4e4e4"/></linearGradient>
<linearGradient id="eg" x1="0" y1="0" x2="1" y2="0"><stop offset="0" stop-color="#f08a10"/><stop offset="0.3" stop-color="#f6a820"/><stop offset="0.36" stop-color="#fde040"/><stop offset="0.6" stop-color="#fde860"/><stop offset="0.66" stop-color="#f47820"/><stop offset="1" stop-color="#e85a18"/></linearGradient>
<linearGradient id="b2" x1="0" y1="1" x2="1" y2="0"><stop offset="0" stop-color="#3aa0ff"/><stop offset="1" stop-color="#1478ee"/></linearGradient>
</defs>
<!-- save -->
<path d="M17 25 q0-1 1-1 h10.3 q1 0 1 1 v10 q0 1-1 1 h-10.3 q-1 0-1-1z" fill="url(#fl)"/>
<rect x="19.2" y="24.6" width="7.6" height="4.6" fill="#e8eaf6"/><rect x="24.2" y="25" width="1.6" height="3.4" fill="#5a5ca8"/>
<rect x="18.6" y="31" width="9" height="4.4" fill="#a9abcf"/><rect x="18.6" y="32.4" width="9" height="0.8" fill="#7c7eb4"/>
<!-- generate image -->
<path d="M59.8 22.4 h12.8 v11.4 l-3.4 3.4 h-9.4z" fill="#fdfdfd" stroke="#9a9a9a" stroke-width="0.7"/>
<path d="M72.6 33.8 h-3.4 v3.4z" fill="#e2e2e2" stroke="#9a9a9a" stroke-width="0.5"/>
<rect x="60.3" y="22.9" width="11.8" height="2.2" fill="#1c54c4"/><rect x="60.6" y="23.2" width="3.4" height="1.2" fill="#dfe9fa"/>
<rect x="60.3" y="26.6" width="11.8" height="6.2" fill="#8a8a8a"/><rect x="60.3" y="26.6" width="11.8" height="2.2" fill="#c9c9c9"/><rect x="60.3" y="31.4" width="11.8" height="1.4" fill="#6e6e6e"/>
<circle cx="67.4" cy="29.8" r="2.9" fill="#e9e9e9"/><circle cx="67.4" cy="29.8" r="2" fill="#17358c"/><circle cx="67.4" cy="29.8" r="0.9" fill="#4f86e8"/>
<!-- generate series -->
<path d="M104.8 22.4 h13 v11.4 l-3.4 3.4 h-9.6z" fill="#fdfdfd" stroke="#8a8a8a" stroke-width="0.7"/>
<path d="M117.8 33.8 h-3.4 v3.4z" fill="#e2e2e2" stroke="#8a8a8a" stroke-width="0.5"/>
<rect x="105.2" y="22.7" width="12.2" height="1.9" fill="#0c0c0c"/>
<path d="M106.4 31.6 L113.2 25.4 L116.8 29.4 L110 35.6z" fill="#0c0c0c"/>
<path d="M108 31.7 L110.4 29.5 L112.3 31.6 L109.9 33.8z M111.3 28.7 L113.3 26.9 L115.2 29 L113.2 30.8z" fill="#cfe2f6"/>
<!-- copy -->
<path d="M153.2 22.4 h5.6 l2.6 2.6 v8 h-8.2z" fill="#ececec" stroke="#a9a9a9" stroke-width="0.7"/>
<path d="M158.6 26 h5.8 l3.2 3.2 v6.6 h-9z" fill="#f8f8f8" stroke="#a4a4a4" stroke-width="0.7"/><path d="M164.4 26 v3.2 h3.2z" fill="#d8d8d8"/>
<!-- fractal type -->
<path d="M193.2 22.4 h9 l3.6 3.6 v11 h-12.6z" fill="url(#pg)" stroke="#bcbcbc" stroke-width="0.6"/>
<path d="M196 33.4 L201.6 22.6 L204 23.9 L198.4 34.7 L195.6 36.2z" fill="#f59a1c"/><path d="M196 33.4 L198.4 34.7 L195.6 36.2z" fill="#444"/><path d="M201 23.8 L201.6 22.6 L204 23.9 L203.4 25.1z" fill="#f6c8a0"/>
<path d="M206.6 28.8 l2 1.6 l-2 1.6z" fill="#cfcfcf"/>
<!-- edit gradient -->
<rect x="235.2" y="24.4" width="14.8" height="11.4" rx="2.2" fill="url(#eg)"/>
<rect x="235.2" y="24.4" width="14.8" height="2.2" rx="1.1" fill="#fff" opacity="0.35"/>
<!-- load preset -->
<path d="M267.6 28.6 l4.6-3.4 l2 1.2 l1.4-0.6 l3.4 2.8 v7 h-11.4z" fill="#2f7fe6"/>
<path d="M268.6 29.2 l3.8-2.8 l5.8 2.8 v5.4 h-9.6z" fill="#dbe8fa"/>
<rect x="273.2" y="28.6" width="5" height="6" fill="url(#eg)"/>
<!-- save preset -->
<rect x="267.8" y="45.2" width="11.2" height="11.2" rx="1" fill="#2a62c8"/>
<rect x="269.6" y="45.6" width="7.4" height="3.6" fill="#eef2fa"/><rect x="274.8" y="46" width="1.4" height="2.6" fill="#2a62c8"/>
<rect x="272.6" y="50.2" width="5.8" height="5.6" fill="url(#eg)"/>
<!-- 2D -->
<rect x="355.8" y="22.8" width="14.2" height="14.2" fill="url(#b2)"/>
<!-- 3D -->
<path d="M403.2 22 L411 26 L411 33.6 L403.2 37.4 L395.4 33.6 L395.4 26z" fill="#1c86f4"/>
<path d="M403.2 22 L411 26 L403.2 30 L395.4 26z" fill="#4aa6ff"/>
<path d="M403.2 30 L411 26 L411 33.6 L403.2 37.4z" fill="#1268d8"/>
<!-- full screen -->
<rect x="435.2" y="22.8" width="15.8" height="13" rx="0.8" fill="#f4f6fa" stroke="#8ea8d0" stroke-width="0.7"/>
<rect x="435.5" y="23.1" width="15.2" height="2.6" fill="#2a6fe0"/>
<g fill="#e8442a"><path d="M437 27.2 h3 l-1 1 l1.6 1.6 l-1 1 l-1.6-1.6 l-1 1z"/><path d="M449.2 27.2 h-3 l1 1 l-1.6 1.6 l1 1 l1.6-1.6 l1 1z"/><path d="M437 34.8 h3 l-1-1 l1.6-1.6 l-1-1 l-1.6 1.6 l-1-1z"/><path d="M449.2 34.8 h-3 l1-1 l-1.6-1.6 l1-1 l1.6 1.6 l1-1z"/></g>
</svg>
<!-- help -->
<svg class="a" style="left:681px;top:20px" width="14" height="14" viewBox="0 0 14 14"><defs><radialGradient id="hg" cx="0.4" cy="0.3" r="0.8"><stop offset="0" stop-color="#7ab8ff"/><stop offset="1" stop-color="#1e62d8"/></radialGradient></defs><circle cx="7" cy="6.7" r="5.6" fill="url(#hg)"/><text x="7" y="10" font-family="Liberation Sans,sans-serif" font-weight="bold" font-size="9" fill="#fff" text-anchor="middle">?</text></svg>
<!-- panel decorations -->
<svg class="a" style="left:483px;top:76px" width="217" height="515" viewBox="483 76 217 515">
<g fill="none" stroke="#e6e3e1" stroke-width="1"><path d="M490 350.5 H659 C666 350.5 668 364.5 676 364.5 H693"/><path d="M490 370 H659 C666 370 668 384.5 676 384.5 H693"/><path d="M490 389.5 H659 C666 389.5 668 404.5 676 404.5 H693"/></g>
<!-- header buttons -->
<g fill="#e4e1df"><circle cx="674" cy="85" r="4.6"/><circle cx="687.5" cy="85" r="4.6"/><circle cx="674" cy="419.5" r="4.6"/><circle cx="687.5" cy="419.5" r="4.6"/></g>
<g fill="none" stroke="#1a1a1a" stroke-width="1.3"><path d="M674 82.6 L676.4 85 L674 87.4 L671.6 85z"/><path d="M685.5 83 L689.5 87 M689.5 83 L685.5 87"/><path d="M674 417.1 L676.4 419.5 L674 421.9 L671.6 419.5z"/><path d="M685.5 417.5 L689.5 421.5 M689.5 417.5 L685.5 421.5"/></g>
<!-- spin arrows -->
<g fill="none" stroke="#1a1a1a" stroke-width="1.2" stroke-linecap="round" stroke-linejoin="round"><path d="M679.2 232.6 L681.6 230.4 L684 232.6 M679.2 235.6 L681.6 237.8 L684 235.6"/><path d="M679.2 264.4 L681.6 262.2 L684 264.4 M679.2 267.4 L681.6 269.6 L684 267.4"/></g>
<!-- parameters icon -->
<path d="M493 98.6 h7 l2.6 2.6 v8 h-9.6z" fill="#fbfbfb" stroke="#bdbdbd" stroke-width="0.5"/>
<path d="M495.4 106.6 L499.4 99 L501.2 100 L497.2 107.6 L495.2 108.6z" fill="#f59a1c"/><path d="M495.4 106.6 L497.2 107.6 L495.2 108.6z" fill="#444"/>
<!-- color settings icon -->
<rect x="493" y="352.6" width="10.2" height="8.6" rx="1.8" fill="url(#eg)"/>
<!-- wrench -->
<g transform="translate(0.9,0.5)"><path d="M494.55 371.2 A2.8 2.8 0 1 1 492.2 373.55" fill="none" stroke="#8e94a8" stroke-width="2.8"/><path d="M494.55 371.2 A2.8 2.8 0 1 1 492.2 373.55" fill="none" stroke="#f6f6fa" stroke-width="2"/>
<path d="M497.6 376.6 L502 380.6" stroke="#f08c14" stroke-width="3.2" stroke-linecap="round"/><path d="M497.8 376 L502.4 380.2" stroke="#fbc04a" stroke-width="1" stroke-linecap="round"/></g>
<!-- animation -->
<defs><linearGradient id="an" x1="0" y1="0" x2="1" y2="0"><stop offset="0" stop-color="#4a4a4a"/><stop offset="1" stop-color="#8a8a8a"/></linearGradient></defs>
<path d="M493 391.6 L498.2 395.8 L493 400z M497.6 391.6 L502.8 395.8 L497.6 400z" fill="url(#an)"/>
<!-- splitter dots -->
<g fill="#8e8a87"><rect x="589" y="410" width="1" height="1.4"/><rect x="591" y="410" width="1" height="1.4"/><rect x="593" y="410" width="1" height="1.4"/></g>
</svg>
<script>
(function(){
var ST=[[0,205,98,48],[1.0,210,104,52],[1.5,218,113,57],[2.0,226,125,65],[3.0,231,135,74],[5.0,245,170,100],[7.3,252,205,140],[9.5,255,232,166],[12,253,242,187],[14.5,247,249,208],[17,230,247,230],[20,209,240,244],[24,180,227,252],[29,150,207,255],[34,118,182,252],[44,68,138,240],[52,40,90,215],[58,15,30,120],[63,0,0,0]];
var DK=[[0,0,0,40],[0.1,30,140,75],[0.2,10,20,90],[0.3,180,85,125],[0.4,0,0,0],[0.5,40,90,210],[0.6,30,130,70],[0.7,0,0,0],[0.8,25,120,70],[0.9,110,140,185],[1,0,0,40]];
var P=63,PB=250,LB=Math.log(1e6),BAIL=1e12,MAXIT=300;
var LIN=new Float32Array(256);for(var i=0;i<256;i++){var c=i/255;LIN[i]=c<=0.04045?c/12.92:Math.pow((c+0.055)/1.055,2.4);}
function lut(S,t,o,i){var k=1;while(k<S.length-1&&S[k][0]<t)k++;var a=S[k-1],b=S[k],f=(t-a[0])/(b[0]-a[0]);if(f<0)f=0;if(f>1)f=1;o[i]=LIN[(a[1]+(b[1]-a[1])*f+0.5)|0];o[i+1]=LIN[(a[2]+(b[2]-a[2])*f+0.5)|0];o[i+2]=LIN[(a[3]+(b[3]-a[3])*f+0.5)|0];}
function col(mu,o,i){if(mu<0){o[i]=o[i+1]=o[i+2]=0;return;}if(mu<=P)lut(ST,mu,o,i);else{var t=(mu-P)/9;lut(DK,t-Math.floor(t),o,i);var f=1-(mu-P)/200;if(f<0)f=0;o[i]*=f;o[i+1]*=f;o[i+2]*=f;}}
function iter(zx,zy,cx,cy){var n=0,x2=zx*zx,y2=zy*zy;while(n<MAXIT){zy=2*zx*zy+cy;zx=x2-y2+cx;x2=zx*zx;y2=zy*zy;n++;if(x2+y2>BAIL)return n-Math.log(0.5*Math.log(x2+y2)/LB)/Math.LN2-3.79;}return -1;}
function blur1(src,dst,w,h,ker,horiz){var r=(ker.length-1)/2;for(var y=0;y<h;y++)for(var x=0;x<w;x++){var s=0;for(var k=-r;k<=r;k++){var xx=x,yy=y;if(horiz){xx=x+k;if(xx<0)xx=0;if(xx>=w)xx=w-1;}else{yy=y+k;if(yy<0)yy=0;if(yy>=h)yy=h-1;}s+=ker[k+r]*src[yy*w+xx];}dst[y*w+x]=s;}}
function draw(id,K,sig,fn){var c=document.getElementById(id);if(!c||!c.getContext)return;var W=c.width,H=c.height,w=Math.round(W*K),h=Math.round(H*K),n=w*h;
var inv=new Float32Array(n),own=new Float32Array(n),tmp=new Float32Array(n),i=0,x,y;
for(y=0;y<h;y++)for(x=0;x<w;x++,i++){var m=fn((x+0.5)*W/w,(y+0.5)*H/h);own[i]=m;inv[i]=(m<0||m>PB)?1/PB:1/(m<0.5?0.5:m);}
var ker=[],s=0,k;for(k=-3;k<=3;k++){var v=Math.exp(-k*k/(2*sig*sig));ker.push(v);s+=v;}for(k=0;k<7;k++)ker[k]/=s;
blur1(inv,tmp,w,h,ker,true);blur1(tmp,inv,w,h,ker,false);
var rgb=new Float32Array(n*3);for(i=0;i<n;i++){var m0=own[i];col((m0<0||m0>P)?m0:1/inv[i],rgb,i*3);}
/* box downscale in linear light */
var hx=new Float32Array(W*h*3),sx=w/W,sy=h/H,ch;
for(y=0;y<h;y++)for(x=0;x<W;x++){var a=x*sx,b=(x+1)*sx,r0=0,g0=0,b0=0;for(var xx=Math.floor(a);xx<b&&xx<w;xx++){var wt=Math.min(b,xx+1)-Math.max(a,xx);var p=(y*w+xx)*3;r0+=wt*rgb[p];g0+=wt*rgb[p+1];b0+=wt*rgb[p+2];}var o=(y*W+x)*3;hx[o]=r0/sx;hx[o+1]=g0/sx;hx[o+2]=b0/sx;}
var g=c.getContext('2d'),im=g.createImageData(W,H),d=im.data;
for(y=0;y<H;y++)for(x=0;x<W;x++){var a2=y*sy,b2=(y+1)*sy,R=0,G=0,B=0;for(var yy=Math.floor(a2);yy<b2&&yy<h;yy++){var wt2=Math.min(b2,yy+1)-Math.max(a2,yy);var p2=(yy*W+x)*3;R+=wt2*hx[p2];G+=wt2*hx[p2+1];B+=wt2*hx[p2+2];}
var o2=(y*W+x)*4,vv=[R/sy,G/sy,B/sy];for(ch=0;ch<3;ch++){var l=vv[ch];d[o2+ch]=255*(l<=0.0031308?l*12.92:1.055*Math.pow(l,1/2.4)-0.055)+0.5;}d[o2+3]=255;}
g.putImageData(im,0,0);}
var SC=455.5,PX=291.3-1,PY=245.333;
draw('cf',1.125,0.3,function(px,py){var cx=(px-PX)/SC-1,cy=(PY-py)/SC;var q=(cx-0.25)*(cx-0.25)+cy*cy;if(q*(q+cx-0.25)<0.25*cy*cy)return -1;if((cx+1)*(cx+1)+cy*cy<0.0625)return -1;return iter(0,0,cx,cy);});
var JS=87.5,JX=105.5,JY=79;
draw('cj',1.37,0.5,function(px,py){return iter((px-JX)/JS,(py-JY)/JS,-1.2900749683352,0.064634115303136);});
})();
</script>
</body></html>
